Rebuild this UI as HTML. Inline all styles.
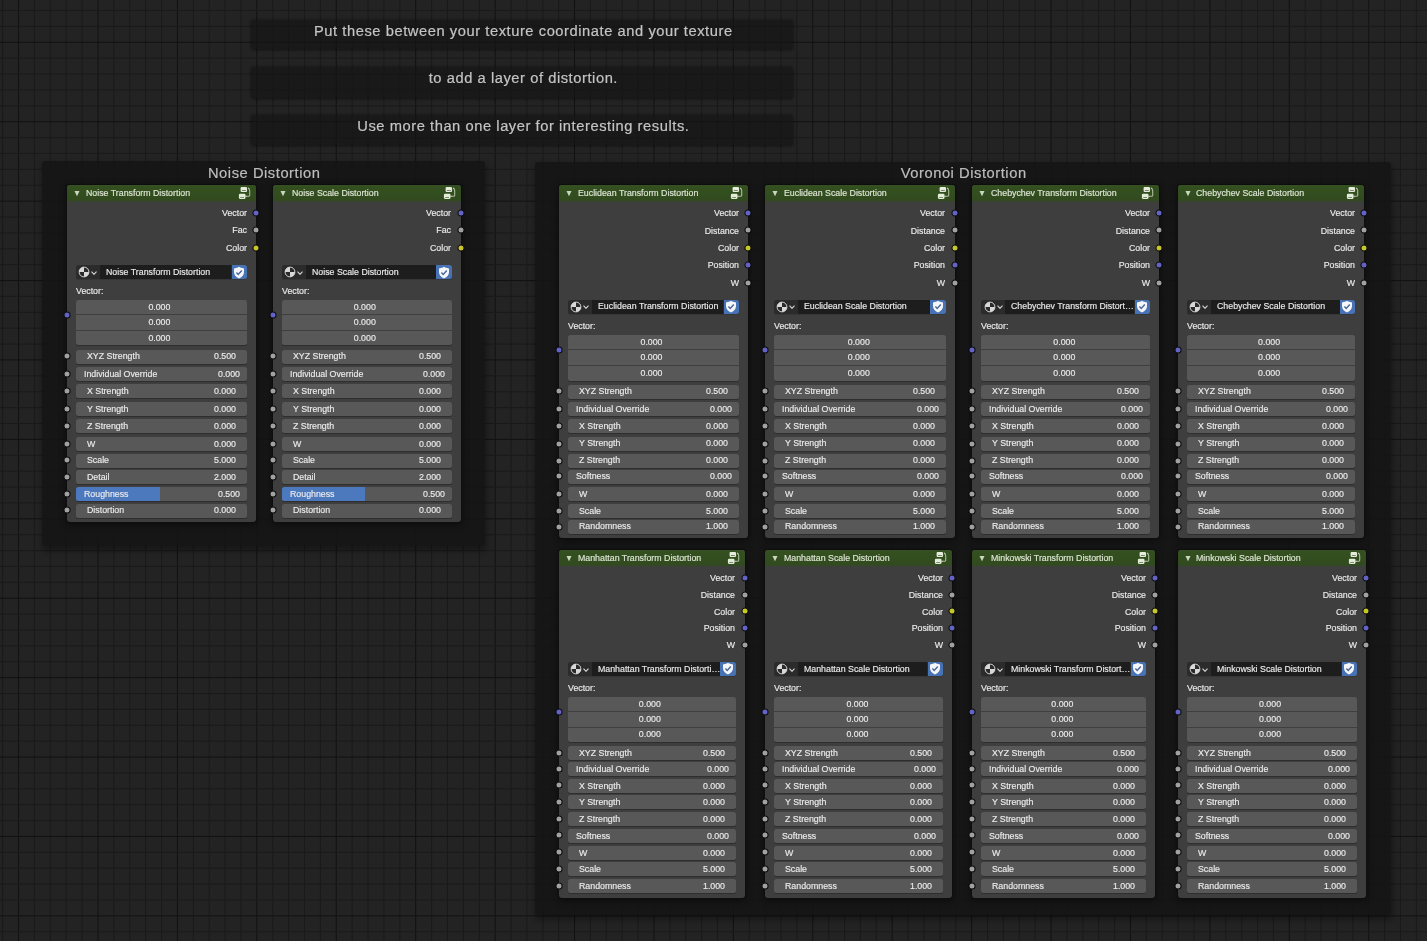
<!DOCTYPE html><html><head><meta charset="utf-8"><style>
*{box-sizing:border-box}
html,body{margin:0;padding:0}
body{width:1427px;height:941px;overflow:hidden;position:relative;background:#232323;font-family:"Liberation Sans", sans-serif;}
.a{position:absolute}
.tf{position:absolute;background:rgba(21,21,21,0.68);border-radius:2px;box-shadow:0 1px 3px rgba(0,0,0,0.35), -1px 0 3px rgba(0,0,0,0.3);color:#bdbdbd;font-size:15.9px;text-align:center;white-space:nowrap}
.fr{position:absolute;background:rgba(20,20,20,0.88);border-radius:3px;box-shadow:1px 4px 6px 1px rgba(0,0,0,0.32)}
.frl{position:absolute;left:0;right:0;color:#bdbdbd;font-size:15.9px;text-align:center;white-space:nowrap}
.nd{position:absolute;background:#3e3e3e;border-radius:3px;box-shadow:0 0 0 1px #0e0e0e, 0 2px 7px 1px rgba(0,0,0,0.42)}
.hd{position:absolute;left:0;top:0;right:0;border-radius:3px 3px 0 0;background:linear-gradient(#37512a 0px,#34501f 1.2px,#314b1f 14.8px,#3e3e3e 100%)}
.ht{position:absolute;will-change:transform;-webkit-text-stroke:0.15px #dfe6d6;color:#dfe6d6;font-size:8.8px;white-space:nowrap;line-height:10px}
.tx{position:absolute;will-change:transform;-webkit-text-stroke:0.15px #ebebeb;color:#ebebeb;font-size:8.8px;white-space:nowrap;line-height:10px}
.so{position:absolute;width:7px;height:7px;border-radius:50%;border:1px solid #0b0b0b}
.fd{position:absolute;background:#585858;border-radius:2.5px;box-shadow:0 1px 0 #2e2e2e}
.db{position:absolute;}
</style></head><body>
<svg class="a" style="left:0;top:0" width="1427" height="941"><rect x="2.20" y="0" width="1" height="941" fill="#1a1a1a"/><rect x="18.08" y="0" width="1" height="941" fill="#121212"/><rect x="33.97" y="0" width="1" height="941" fill="#1a1a1a"/><rect x="49.85" y="0" width="1" height="941" fill="#1a1a1a"/><rect x="65.74" y="0" width="1" height="941" fill="#1a1a1a"/><rect x="81.62" y="0" width="1" height="941" fill="#1a1a1a"/><rect x="97.50" y="0" width="1" height="941" fill="#121212"/><rect x="113.39" y="0" width="1" height="941" fill="#1a1a1a"/><rect x="129.27" y="0" width="1" height="941" fill="#1a1a1a"/><rect x="145.16" y="0" width="1" height="941" fill="#1a1a1a"/><rect x="161.04" y="0" width="1" height="941" fill="#1a1a1a"/><rect x="176.92" y="0" width="1" height="941" fill="#121212"/><rect x="192.81" y="0" width="1" height="941" fill="#1a1a1a"/><rect x="208.69" y="0" width="1" height="941" fill="#1a1a1a"/><rect x="224.58" y="0" width="1" height="941" fill="#1a1a1a"/><rect x="240.46" y="0" width="1" height="941" fill="#1a1a1a"/><rect x="256.34" y="0" width="1" height="941" fill="#121212"/><rect x="272.23" y="0" width="1" height="941" fill="#1a1a1a"/><rect x="288.11" y="0" width="1" height="941" fill="#1a1a1a"/><rect x="304.00" y="0" width="1" height="941" fill="#1a1a1a"/><rect x="319.88" y="0" width="1" height="941" fill="#1a1a1a"/><rect x="335.76" y="0" width="1" height="941" fill="#121212"/><rect x="351.65" y="0" width="1" height="941" fill="#1a1a1a"/><rect x="367.53" y="0" width="1" height="941" fill="#1a1a1a"/><rect x="383.42" y="0" width="1" height="941" fill="#1a1a1a"/><rect x="399.30" y="0" width="1" height="941" fill="#1a1a1a"/><rect x="415.18" y="0" width="1" height="941" fill="#121212"/><rect x="431.07" y="0" width="1" height="941" fill="#1a1a1a"/><rect x="446.95" y="0" width="1" height="941" fill="#1a1a1a"/><rect x="462.84" y="0" width="1" height="941" fill="#1a1a1a"/><rect x="478.72" y="0" width="1" height="941" fill="#1a1a1a"/><rect x="494.60" y="0" width="1" height="941" fill="#121212"/><rect x="510.49" y="0" width="1" height="941" fill="#1a1a1a"/><rect x="526.37" y="0" width="1" height="941" fill="#1a1a1a"/><rect x="542.26" y="0" width="1" height="941" fill="#1a1a1a"/><rect x="558.14" y="0" width="1" height="941" fill="#1a1a1a"/><rect x="574.02" y="0" width="1" height="941" fill="#121212"/><rect x="589.91" y="0" width="1" height="941" fill="#1a1a1a"/><rect x="605.79" y="0" width="1" height="941" fill="#1a1a1a"/><rect x="621.68" y="0" width="1" height="941" fill="#1a1a1a"/><rect x="637.56" y="0" width="1" height="941" fill="#1a1a1a"/><rect x="653.44" y="0" width="1" height="941" fill="#121212"/><rect x="669.33" y="0" width="1" height="941" fill="#1a1a1a"/><rect x="685.21" y="0" width="1" height="941" fill="#1a1a1a"/><rect x="701.10" y="0" width="1" height="941" fill="#1a1a1a"/><rect x="716.98" y="0" width="1" height="941" fill="#1a1a1a"/><rect x="732.86" y="0" width="1" height="941" fill="#121212"/><rect x="748.75" y="0" width="1" height="941" fill="#1a1a1a"/><rect x="764.63" y="0" width="1" height="941" fill="#1a1a1a"/><rect x="780.52" y="0" width="1" height="941" fill="#1a1a1a"/><rect x="796.40" y="0" width="1" height="941" fill="#1a1a1a"/><rect x="812.28" y="0" width="1" height="941" fill="#121212"/><rect x="828.17" y="0" width="1" height="941" fill="#1a1a1a"/><rect x="844.05" y="0" width="1" height="941" fill="#1a1a1a"/><rect x="859.94" y="0" width="1" height="941" fill="#1a1a1a"/><rect x="875.82" y="0" width="1" height="941" fill="#1a1a1a"/><rect x="891.70" y="0" width="1" height="941" fill="#121212"/><rect x="907.59" y="0" width="1" height="941" fill="#1a1a1a"/><rect x="923.47" y="0" width="1" height="941" fill="#1a1a1a"/><rect x="939.36" y="0" width="1" height="941" fill="#1a1a1a"/><rect x="955.24" y="0" width="1" height="941" fill="#1a1a1a"/><rect x="971.12" y="0" width="1" height="941" fill="#121212"/><rect x="987.01" y="0" width="1" height="941" fill="#1a1a1a"/><rect x="1002.89" y="0" width="1" height="941" fill="#1a1a1a"/><rect x="1018.78" y="0" width="1" height="941" fill="#1a1a1a"/><rect x="1034.66" y="0" width="1" height="941" fill="#1a1a1a"/><rect x="1050.54" y="0" width="1" height="941" fill="#121212"/><rect x="1066.43" y="0" width="1" height="941" fill="#1a1a1a"/><rect x="1082.31" y="0" width="1" height="941" fill="#1a1a1a"/><rect x="1098.20" y="0" width="1" height="941" fill="#1a1a1a"/><rect x="1114.08" y="0" width="1" height="941" fill="#1a1a1a"/><rect x="1129.96" y="0" width="1" height="941" fill="#121212"/><rect x="1145.85" y="0" width="1" height="941" fill="#1a1a1a"/><rect x="1161.73" y="0" width="1" height="941" fill="#1a1a1a"/><rect x="1177.62" y="0" width="1" height="941" fill="#1a1a1a"/><rect x="1193.50" y="0" width="1" height="941" fill="#1a1a1a"/><rect x="1209.38" y="0" width="1" height="941" fill="#121212"/><rect x="1225.27" y="0" width="1" height="941" fill="#1a1a1a"/><rect x="1241.15" y="0" width="1" height="941" fill="#1a1a1a"/><rect x="1257.04" y="0" width="1" height="941" fill="#1a1a1a"/><rect x="1272.92" y="0" width="1" height="941" fill="#1a1a1a"/><rect x="1288.80" y="0" width="1" height="941" fill="#121212"/><rect x="1304.69" y="0" width="1" height="941" fill="#1a1a1a"/><rect x="1320.57" y="0" width="1" height="941" fill="#1a1a1a"/><rect x="1336.46" y="0" width="1" height="941" fill="#1a1a1a"/><rect x="1352.34" y="0" width="1" height="941" fill="#1a1a1a"/><rect x="1368.22" y="0" width="1" height="941" fill="#121212"/><rect x="1384.11" y="0" width="1" height="941" fill="#1a1a1a"/><rect x="1399.99" y="0" width="1" height="941" fill="#1a1a1a"/><rect x="1415.88" y="0" width="1" height="941" fill="#1a1a1a"/><rect x="0" y="10.00" width="1427" height="1" fill="#1a1a1a"/><rect x="0" y="25.88" width="1427" height="1" fill="#1a1a1a"/><rect x="0" y="41.77" width="1427" height="1" fill="#121212"/><rect x="0" y="57.65" width="1427" height="1" fill="#1a1a1a"/><rect x="0" y="73.54" width="1427" height="1" fill="#1a1a1a"/><rect x="0" y="89.42" width="1427" height="1" fill="#1a1a1a"/><rect x="0" y="105.30" width="1427" height="1" fill="#1a1a1a"/><rect x="0" y="121.19" width="1427" height="1" fill="#121212"/><rect x="0" y="137.07" width="1427" height="1" fill="#1a1a1a"/><rect x="0" y="152.96" width="1427" height="1" fill="#1a1a1a"/><rect x="0" y="168.84" width="1427" height="1" fill="#1a1a1a"/><rect x="0" y="184.72" width="1427" height="1" fill="#1a1a1a"/><rect x="0" y="200.61" width="1427" height="1" fill="#121212"/><rect x="0" y="216.49" width="1427" height="1" fill="#1a1a1a"/><rect x="0" y="232.38" width="1427" height="1" fill="#1a1a1a"/><rect x="0" y="248.26" width="1427" height="1" fill="#1a1a1a"/><rect x="0" y="264.14" width="1427" height="1" fill="#1a1a1a"/><rect x="0" y="280.03" width="1427" height="1" fill="#121212"/><rect x="0" y="295.91" width="1427" height="1" fill="#1a1a1a"/><rect x="0" y="311.80" width="1427" height="1" fill="#1a1a1a"/><rect x="0" y="327.68" width="1427" height="1" fill="#1a1a1a"/><rect x="0" y="343.56" width="1427" height="1" fill="#1a1a1a"/><rect x="0" y="359.45" width="1427" height="1" fill="#121212"/><rect x="0" y="375.33" width="1427" height="1" fill="#1a1a1a"/><rect x="0" y="391.22" width="1427" height="1" fill="#1a1a1a"/><rect x="0" y="407.10" width="1427" height="1" fill="#1a1a1a"/><rect x="0" y="422.98" width="1427" height="1" fill="#1a1a1a"/><rect x="0" y="438.87" width="1427" height="1" fill="#121212"/><rect x="0" y="454.75" width="1427" height="1" fill="#1a1a1a"/><rect x="0" y="470.64" width="1427" height="1" fill="#1a1a1a"/><rect x="0" y="486.52" width="1427" height="1" fill="#1a1a1a"/><rect x="0" y="502.40" width="1427" height="1" fill="#1a1a1a"/><rect x="0" y="518.29" width="1427" height="1" fill="#121212"/><rect x="0" y="534.17" width="1427" height="1" fill="#1a1a1a"/><rect x="0" y="550.06" width="1427" height="1" fill="#1a1a1a"/><rect x="0" y="565.94" width="1427" height="1" fill="#1a1a1a"/><rect x="0" y="581.82" width="1427" height="1" fill="#1a1a1a"/><rect x="0" y="597.71" width="1427" height="1" fill="#121212"/><rect x="0" y="613.59" width="1427" height="1" fill="#1a1a1a"/><rect x="0" y="629.48" width="1427" height="1" fill="#1a1a1a"/><rect x="0" y="645.36" width="1427" height="1" fill="#1a1a1a"/><rect x="0" y="661.24" width="1427" height="1" fill="#1a1a1a"/><rect x="0" y="677.13" width="1427" height="1" fill="#121212"/><rect x="0" y="693.01" width="1427" height="1" fill="#1a1a1a"/><rect x="0" y="708.90" width="1427" height="1" fill="#1a1a1a"/><rect x="0" y="724.78" width="1427" height="1" fill="#1a1a1a"/><rect x="0" y="740.66" width="1427" height="1" fill="#1a1a1a"/><rect x="0" y="756.55" width="1427" height="1" fill="#121212"/><rect x="0" y="772.43" width="1427" height="1" fill="#1a1a1a"/><rect x="0" y="788.32" width="1427" height="1" fill="#1a1a1a"/><rect x="0" y="804.20" width="1427" height="1" fill="#1a1a1a"/><rect x="0" y="820.08" width="1427" height="1" fill="#1a1a1a"/><rect x="0" y="835.97" width="1427" height="1" fill="#121212"/><rect x="0" y="851.85" width="1427" height="1" fill="#1a1a1a"/><rect x="0" y="867.74" width="1427" height="1" fill="#1a1a1a"/><rect x="0" y="883.62" width="1427" height="1" fill="#1a1a1a"/><rect x="0" y="899.50" width="1427" height="1" fill="#1a1a1a"/><rect x="0" y="915.39" width="1427" height="1" fill="#121212"/><rect x="0" y="931.27" width="1427" height="1" fill="#1a1a1a"/></svg>
<div class="tf" style="left:252.3px;top:19.5px;width:540.7px;height:29.1px"></div>
<div class="a" style="left:252.58px;width:540.7px;top:23.36px;line-height:16.89px;font-size:14.7px;letter-spacing:0.56px;-webkit-text-stroke:0.2px #c4c4c4;color:#c4c4c4;text-align:center;white-space:nowrap;will-change:transform;height:16.89px">Put these between your texture coordinate and your texture</div>
<div class="tf" style="left:252.3px;top:66.9px;width:540.7px;height:30.799999999999997px"></div>
<div class="a" style="left:252.58px;width:540.7px;top:70.46px;line-height:16.89px;font-size:14.7px;letter-spacing:0.56px;-webkit-text-stroke:0.2px #c4c4c4;color:#c4c4c4;text-align:center;white-space:nowrap;will-change:transform;height:16.89px">to add a layer of distortion.</div>
<div class="tf" style="left:252.3px;top:115.3px;width:540.7px;height:29.39999999999999px"></div>
<div class="a" style="left:252.58px;width:540.7px;top:118.06px;line-height:16.89px;font-size:14.7px;letter-spacing:0.56px;-webkit-text-stroke:0.2px #c4c4c4;color:#c4c4c4;text-align:center;white-space:nowrap;will-change:transform;height:16.89px">Use more than one layer for interesting results.</div>
<div class="fr" style="left:42.4px;top:161.2px;width:442.40000000000003px;height:384.8px"></div>
<div class="a" style="left:42.67px;width:442.40000000000003px;top:165.06px;line-height:16.89px;height:16.89px;font-size:14.7px;letter-spacing:0.55px;-webkit-text-stroke:0.2px #bdbdbd;color:#bdbdbd;text-align:center;white-space:nowrap;will-change:transform">Noise Distortion</div>
<div class="fr" style="left:535.4px;top:161.6px;width:855.4px;height:753.6999999999999px"></div>
<div class="a" style="left:535.67px;width:855.4px;top:165.06px;line-height:16.89px;height:16.89px;font-size:14.7px;letter-spacing:0.55px;-webkit-text-stroke:0.2px #bdbdbd;color:#bdbdbd;text-align:center;white-space:nowrap;will-change:transform">Voronoi Distortion</div>
<div class="nd" style="left:67.00px;top:185.00px;width:188.80px;height:336.60px"><div class="hd" style="height:17.60px"></div></div><svg class="a" style="left:74.00px;top:190.60px" width="6" height="6" viewBox="0 0 6 6"><path d="M0.5 0.1 L5.5 0.1 L3 5.2 Z" fill="#cad6bd"/></svg><div class="ht" style="left:85.50px;top:187.84px;line-height:10.11px;">Noise Transform Distortion</div><svg class="a" style="left:235.80px;top:185.00px" width="16" height="16" viewBox="0 0 16 16"><rect x="4.6" y="1.9" width="6.45" height="5.1" rx="1.1" fill="#e6eedb"/><rect x="5.9" y="5.1" width="3.95" height="0.8" fill="#5e6a55"/><rect x="2.9" y="8.85" width="6.6" height="5.1" rx="1.1" fill="#e2ecd6"/><rect x="4.2" y="12.2" width="3.8" height="0.75" fill="#5e6a55"/><path d="M12.3 2.9 Q13.7 3.6 13.7 6 L13.7 10.2 Q13.7 11.3 12.6 11.3 L9.6 11.3" fill="none" stroke="#aebd9e" stroke-width="1.1"/><path d="M12.0 2.6 L13.0 3.2 L12.6 4.6 Z" fill="#d8e4cc"/><path d="M9.4 10.4 L11.2 11.3 L9.4 12.2 Z" fill="#c4d2b6"/></svg><div class="tx" style="left:46.50px;width:200px;text-align:right;top:207.94px;line-height:10.11px;">Vector</div><svg class="a" style="left:250.80px;top:207.70px" width="10" height="10" viewBox="0 0 10 10"><circle cx="5" cy="5" r="3.05" fill="#6363c7" stroke="#0c0c0c" stroke-width="1.1"/></svg><div class="tx" style="left:46.50px;width:200px;text-align:right;top:225.34px;line-height:10.11px;">Fac</div><svg class="a" style="left:250.80px;top:225.10px" width="10" height="10" viewBox="0 0 10 10"><circle cx="5" cy="5" r="3.05" fill="#a1a1a1" stroke="#0c0c0c" stroke-width="1.1"/></svg><div class="tx" style="left:46.50px;width:200px;text-align:right;top:242.94px;line-height:10.11px;">Color</div><svg class="a" style="left:250.80px;top:242.70px" width="10" height="10" viewBox="0 0 10 10"><circle cx="5" cy="5" r="3.05" fill="#c7c729" stroke="#0c0c0c" stroke-width="1.1"/></svg><div class="a" style="left:76.00px;top:265.00px;width:170.80px;height:14.00px;background:#2b2b2b;border-radius:2.5px;box-shadow:0 1px 0 #363636"></div><div class="a" style="left:99.70px;top:265.00px;width:131.60px;height:14.00px;background:#1d1d1d"></div><svg class="a" style="left:78.30px;top:266.00px" width="12" height="12" viewBox="0 0 12 12"><circle cx="6" cy="6" r="5" fill="#d8d8d8"/><path d="M6 1 A5 5 0 0 1 11 6 L6 6 Z" fill="#2a2a2a"/><path d="M6 6 L1 6 A5 5 0 0 0 6 11 Z" fill="#2a2a2a"/><circle cx="6" cy="6" r="4.9" fill="none" stroke="#d8d8d8" stroke-width="0.9"/></svg><svg class="a" style="left:91.30px;top:270.60px" width="6" height="4" viewBox="0 0 6 4"><path d="M0.5 0.7 L3 3.3 L5.5 0.7" fill="none" stroke="#d8d8d8" stroke-width="1.1"/></svg><div class="tx" style="left:105.70px;top:267.14px;line-height:10.11px;">Noise Transform Distortion</div><div class="a" style="left:231.50px;top:265.00px;width:15.30px;height:14.00px;background:#4772b3;border-radius:0 2.5px 2.5px 0"></div><svg class="a" style="left:233.15px;top:265.50px" width="12" height="13" viewBox="0 0 12 13"><path d="M6 0.7 L7.2 1.6 L11 2.4 L11 6 Q11 10.3 6 12.4 Q1 10.3 1 6 L1 2.4 L4.8 1.6 Z" fill="#f4f6fa"/><path d="M3.4 6.6 L5.2 8.4 L8.8 4.6" fill="none" stroke="#4a6796" stroke-width="1.4"/></svg><div class="tx" style="left:76.00px;top:285.94px;line-height:10.11px;">Vector:</div><div class="fd" style="left:76.00px;top:300.10px;width:170.80px;height:45.40px"></div><div class="a" style="left:76.00px;top:313.80px;width:170.80px;height:1px;background:#3f3f3f"></div><div class="a" style="left:76.00px;top:329.80px;width:170.80px;height:1px;background:#3f3f3f"></div><div class="tx" style="left:74.40px;width:170.80px;text-align:center;top:301.84px;line-height:10.11px;">0.000</div><div class="tx" style="left:74.40px;width:170.80px;text-align:center;top:316.94px;line-height:10.11px;">0.000</div><div class="tx" style="left:74.40px;width:170.80px;text-align:center;top:332.54px;line-height:10.11px;">0.000</div><svg class="a" style="left:62.00px;top:310.20px" width="10" height="10" viewBox="0 0 10 10"><circle cx="5" cy="5" r="3.05" fill="#6363c7" stroke="#0c0c0c" stroke-width="1.1"/></svg><div class="fd" style="left:76.00px;top:349.60px;width:170.80px;height:14.00px;overflow:hidden"></div><div class="tx" style="left:87.20px;top:351.24px;line-height:10.11px;">XYZ Strength</div><div class="tx" style="left:35.70px;width:200px;text-align:right;top:351.24px;line-height:10.11px;">0.500</div><svg class="a" style="left:62.00px;top:351.20px" width="10" height="10" viewBox="0 0 10 10"><circle cx="5" cy="5" r="3.05" fill="#a1a1a1" stroke="#0c0c0c" stroke-width="1.1"/></svg><div class="fd" style="left:76.00px;top:367.20px;width:170.80px;height:14.00px;overflow:hidden"></div><div class="tx" style="left:83.70px;top:368.84px;line-height:10.11px;">Individual Override</div><div class="tx" style="left:39.70px;width:200px;text-align:right;top:368.84px;line-height:10.11px;">0.000</div><svg class="a" style="left:62.00px;top:368.80px" width="10" height="10" viewBox="0 0 10 10"><circle cx="5" cy="5" r="3.05" fill="#a1a1a1" stroke="#0c0c0c" stroke-width="1.1"/></svg><div class="fd" style="left:76.00px;top:384.40px;width:170.80px;height:14.00px;overflow:hidden"></div><div class="tx" style="left:87.20px;top:386.04px;line-height:10.11px;">X Strength</div><div class="tx" style="left:35.70px;width:200px;text-align:right;top:386.04px;line-height:10.11px;">0.000</div><svg class="a" style="left:62.00px;top:386.00px" width="10" height="10" viewBox="0 0 10 10"><circle cx="5" cy="5" r="3.05" fill="#a1a1a1" stroke="#0c0c0c" stroke-width="1.1"/></svg><div class="fd" style="left:76.00px;top:402.10px;width:170.80px;height:14.00px;overflow:hidden"></div><div class="tx" style="left:87.20px;top:403.74px;line-height:10.11px;">Y Strength</div><div class="tx" style="left:35.70px;width:200px;text-align:right;top:403.74px;line-height:10.11px;">0.000</div><svg class="a" style="left:62.00px;top:403.70px" width="10" height="10" viewBox="0 0 10 10"><circle cx="5" cy="5" r="3.05" fill="#a1a1a1" stroke="#0c0c0c" stroke-width="1.1"/></svg><div class="fd" style="left:76.00px;top:419.30px;width:170.80px;height:14.00px;overflow:hidden"></div><div class="tx" style="left:87.20px;top:420.94px;line-height:10.11px;">Z Strength</div><div class="tx" style="left:35.70px;width:200px;text-align:right;top:420.94px;line-height:10.11px;">0.000</div><svg class="a" style="left:62.00px;top:420.90px" width="10" height="10" viewBox="0 0 10 10"><circle cx="5" cy="5" r="3.05" fill="#a1a1a1" stroke="#0c0c0c" stroke-width="1.1"/></svg><div class="fd" style="left:76.00px;top:437.10px;width:170.80px;height:14.00px;overflow:hidden"></div><div class="tx" style="left:87.20px;top:438.74px;line-height:10.11px;">W</div><div class="tx" style="left:35.70px;width:200px;text-align:right;top:438.74px;line-height:10.11px;">0.000</div><svg class="a" style="left:62.00px;top:438.70px" width="10" height="10" viewBox="0 0 10 10"><circle cx="5" cy="5" r="3.05" fill="#a1a1a1" stroke="#0c0c0c" stroke-width="1.1"/></svg><div class="fd" style="left:76.00px;top:453.70px;width:170.80px;height:14.00px;overflow:hidden"></div><div class="tx" style="left:87.20px;top:455.34px;line-height:10.11px;">Scale</div><div class="tx" style="left:35.70px;width:200px;text-align:right;top:455.34px;line-height:10.11px;">5.000</div><svg class="a" style="left:62.00px;top:455.30px" width="10" height="10" viewBox="0 0 10 10"><circle cx="5" cy="5" r="3.05" fill="#a1a1a1" stroke="#0c0c0c" stroke-width="1.1"/></svg><div class="fd" style="left:76.00px;top:469.90px;width:170.80px;height:14.00px;overflow:hidden"></div><div class="tx" style="left:87.20px;top:471.54px;line-height:10.11px;">Detail</div><div class="tx" style="left:35.70px;width:200px;text-align:right;top:471.54px;line-height:10.11px;">2.000</div><svg class="a" style="left:62.00px;top:471.50px" width="10" height="10" viewBox="0 0 10 10"><circle cx="5" cy="5" r="3.05" fill="#a1a1a1" stroke="#0c0c0c" stroke-width="1.1"/></svg><div class="fd" style="left:76.00px;top:487.10px;width:170.80px;height:14.00px;overflow:hidden"><div style="position:absolute;left:0;top:0;bottom:0;width:83.69px;background:#4c78bd"></div></div><div class="tx" style="left:83.70px;top:488.74px;line-height:10.11px;">Roughness</div><div class="tx" style="left:39.70px;width:200px;text-align:right;top:488.74px;line-height:10.11px;">0.500</div><svg class="a" style="left:62.00px;top:488.70px" width="10" height="10" viewBox="0 0 10 10"><circle cx="5" cy="5" r="3.05" fill="#a1a1a1" stroke="#0c0c0c" stroke-width="1.1"/></svg><div class="fd" style="left:76.00px;top:503.70px;width:170.80px;height:14.00px;overflow:hidden"></div><div class="tx" style="left:87.20px;top:505.34px;line-height:10.11px;">Distortion</div><div class="tx" style="left:35.70px;width:200px;text-align:right;top:505.34px;line-height:10.11px;">0.000</div><svg class="a" style="left:62.00px;top:505.30px" width="10" height="10" viewBox="0 0 10 10"><circle cx="5" cy="5" r="3.05" fill="#a1a1a1" stroke="#0c0c0c" stroke-width="1.1"/></svg>
<div class="nd" style="left:273.00px;top:185.00px;width:187.60px;height:336.60px"><div class="hd" style="height:17.60px"></div></div><svg class="a" style="left:280.00px;top:190.60px" width="6" height="6" viewBox="0 0 6 6"><path d="M0.5 0.1 L5.5 0.1 L3 5.2 Z" fill="#cad6bd"/></svg><div class="ht" style="left:291.50px;top:187.84px;line-height:10.11px;">Noise Scale Distortion</div><svg class="a" style="left:440.60px;top:185.00px" width="16" height="16" viewBox="0 0 16 16"><rect x="4.6" y="1.9" width="6.45" height="5.1" rx="1.1" fill="#e6eedb"/><rect x="5.9" y="5.1" width="3.95" height="0.8" fill="#5e6a55"/><rect x="2.9" y="8.85" width="6.6" height="5.1" rx="1.1" fill="#e2ecd6"/><rect x="4.2" y="12.2" width="3.8" height="0.75" fill="#5e6a55"/><path d="M12.3 2.9 Q13.7 3.6 13.7 6 L13.7 10.2 Q13.7 11.3 12.6 11.3 L9.6 11.3" fill="none" stroke="#aebd9e" stroke-width="1.1"/><path d="M12.0 2.6 L13.0 3.2 L12.6 4.6 Z" fill="#d8e4cc"/><path d="M9.4 10.4 L11.2 11.3 L9.4 12.2 Z" fill="#c4d2b6"/></svg><div class="tx" style="left:251.30px;width:200px;text-align:right;top:207.94px;line-height:10.11px;">Vector</div><svg class="a" style="left:455.60px;top:207.70px" width="10" height="10" viewBox="0 0 10 10"><circle cx="5" cy="5" r="3.05" fill="#6363c7" stroke="#0c0c0c" stroke-width="1.1"/></svg><div class="tx" style="left:251.30px;width:200px;text-align:right;top:225.34px;line-height:10.11px;">Fac</div><svg class="a" style="left:455.60px;top:225.10px" width="10" height="10" viewBox="0 0 10 10"><circle cx="5" cy="5" r="3.05" fill="#a1a1a1" stroke="#0c0c0c" stroke-width="1.1"/></svg><div class="tx" style="left:251.30px;width:200px;text-align:right;top:242.94px;line-height:10.11px;">Color</div><svg class="a" style="left:455.60px;top:242.70px" width="10" height="10" viewBox="0 0 10 10"><circle cx="5" cy="5" r="3.05" fill="#c7c729" stroke="#0c0c0c" stroke-width="1.1"/></svg><div class="a" style="left:282.00px;top:265.00px;width:169.60px;height:14.00px;background:#2b2b2b;border-radius:2.5px;box-shadow:0 1px 0 #363636"></div><div class="a" style="left:305.70px;top:265.00px;width:130.40px;height:14.00px;background:#1d1d1d"></div><svg class="a" style="left:284.30px;top:266.00px" width="12" height="12" viewBox="0 0 12 12"><circle cx="6" cy="6" r="5" fill="#d8d8d8"/><path d="M6 1 A5 5 0 0 1 11 6 L6 6 Z" fill="#2a2a2a"/><path d="M6 6 L1 6 A5 5 0 0 0 6 11 Z" fill="#2a2a2a"/><circle cx="6" cy="6" r="4.9" fill="none" stroke="#d8d8d8" stroke-width="0.9"/></svg><svg class="a" style="left:297.30px;top:270.60px" width="6" height="4" viewBox="0 0 6 4"><path d="M0.5 0.7 L3 3.3 L5.5 0.7" fill="none" stroke="#d8d8d8" stroke-width="1.1"/></svg><div class="tx" style="left:311.70px;top:267.14px;line-height:10.11px;">Noise Scale Distortion</div><div class="a" style="left:436.30px;top:265.00px;width:15.30px;height:14.00px;background:#4772b3;border-radius:0 2.5px 2.5px 0"></div><svg class="a" style="left:437.95px;top:265.50px" width="12" height="13" viewBox="0 0 12 13"><path d="M6 0.7 L7.2 1.6 L11 2.4 L11 6 Q11 10.3 6 12.4 Q1 10.3 1 6 L1 2.4 L4.8 1.6 Z" fill="#f4f6fa"/><path d="M3.4 6.6 L5.2 8.4 L8.8 4.6" fill="none" stroke="#4a6796" stroke-width="1.4"/></svg><div class="tx" style="left:282.00px;top:285.94px;line-height:10.11px;">Vector:</div><div class="fd" style="left:282.00px;top:300.10px;width:169.60px;height:45.40px"></div><div class="a" style="left:282.00px;top:313.80px;width:169.60px;height:1px;background:#3f3f3f"></div><div class="a" style="left:282.00px;top:329.80px;width:169.60px;height:1px;background:#3f3f3f"></div><div class="tx" style="left:280.40px;width:169.60px;text-align:center;top:301.84px;line-height:10.11px;">0.000</div><div class="tx" style="left:280.40px;width:169.60px;text-align:center;top:316.94px;line-height:10.11px;">0.000</div><div class="tx" style="left:280.40px;width:169.60px;text-align:center;top:332.54px;line-height:10.11px;">0.000</div><svg class="a" style="left:268.00px;top:310.20px" width="10" height="10" viewBox="0 0 10 10"><circle cx="5" cy="5" r="3.05" fill="#6363c7" stroke="#0c0c0c" stroke-width="1.1"/></svg><div class="fd" style="left:282.00px;top:349.60px;width:169.60px;height:14.00px;overflow:hidden"></div><div class="tx" style="left:293.20px;top:351.24px;line-height:10.11px;">XYZ Strength</div><div class="tx" style="left:240.50px;width:200px;text-align:right;top:351.24px;line-height:10.11px;">0.500</div><svg class="a" style="left:268.00px;top:351.20px" width="10" height="10" viewBox="0 0 10 10"><circle cx="5" cy="5" r="3.05" fill="#a1a1a1" stroke="#0c0c0c" stroke-width="1.1"/></svg><div class="fd" style="left:282.00px;top:367.20px;width:169.60px;height:14.00px;overflow:hidden"></div><div class="tx" style="left:289.70px;top:368.84px;line-height:10.11px;">Individual Override</div><div class="tx" style="left:244.50px;width:200px;text-align:right;top:368.84px;line-height:10.11px;">0.000</div><svg class="a" style="left:268.00px;top:368.80px" width="10" height="10" viewBox="0 0 10 10"><circle cx="5" cy="5" r="3.05" fill="#a1a1a1" stroke="#0c0c0c" stroke-width="1.1"/></svg><div class="fd" style="left:282.00px;top:384.40px;width:169.60px;height:14.00px;overflow:hidden"></div><div class="tx" style="left:293.20px;top:386.04px;line-height:10.11px;">X Strength</div><div class="tx" style="left:240.50px;width:200px;text-align:right;top:386.04px;line-height:10.11px;">0.000</div><svg class="a" style="left:268.00px;top:386.00px" width="10" height="10" viewBox="0 0 10 10"><circle cx="5" cy="5" r="3.05" fill="#a1a1a1" stroke="#0c0c0c" stroke-width="1.1"/></svg><div class="fd" style="left:282.00px;top:402.10px;width:169.60px;height:14.00px;overflow:hidden"></div><div class="tx" style="left:293.20px;top:403.74px;line-height:10.11px;">Y Strength</div><div class="tx" style="left:240.50px;width:200px;text-align:right;top:403.74px;line-height:10.11px;">0.000</div><svg class="a" style="left:268.00px;top:403.70px" width="10" height="10" viewBox="0 0 10 10"><circle cx="5" cy="5" r="3.05" fill="#a1a1a1" stroke="#0c0c0c" stroke-width="1.1"/></svg><div class="fd" style="left:282.00px;top:419.30px;width:169.60px;height:14.00px;overflow:hidden"></div><div class="tx" style="left:293.20px;top:420.94px;line-height:10.11px;">Z Strength</div><div class="tx" style="left:240.50px;width:200px;text-align:right;top:420.94px;line-height:10.11px;">0.000</div><svg class="a" style="left:268.00px;top:420.90px" width="10" height="10" viewBox="0 0 10 10"><circle cx="5" cy="5" r="3.05" fill="#a1a1a1" stroke="#0c0c0c" stroke-width="1.1"/></svg><div class="fd" style="left:282.00px;top:437.10px;width:169.60px;height:14.00px;overflow:hidden"></div><div class="tx" style="left:293.20px;top:438.74px;line-height:10.11px;">W</div><div class="tx" style="left:240.50px;width:200px;text-align:right;top:438.74px;line-height:10.11px;">0.000</div><svg class="a" style="left:268.00px;top:438.70px" width="10" height="10" viewBox="0 0 10 10"><circle cx="5" cy="5" r="3.05" fill="#a1a1a1" stroke="#0c0c0c" stroke-width="1.1"/></svg><div class="fd" style="left:282.00px;top:453.70px;width:169.60px;height:14.00px;overflow:hidden"></div><div class="tx" style="left:293.20px;top:455.34px;line-height:10.11px;">Scale</div><div class="tx" style="left:240.50px;width:200px;text-align:right;top:455.34px;line-height:10.11px;">5.000</div><svg class="a" style="left:268.00px;top:455.30px" width="10" height="10" viewBox="0 0 10 10"><circle cx="5" cy="5" r="3.05" fill="#a1a1a1" stroke="#0c0c0c" stroke-width="1.1"/></svg><div class="fd" style="left:282.00px;top:469.90px;width:169.60px;height:14.00px;overflow:hidden"></div><div class="tx" style="left:293.20px;top:471.54px;line-height:10.11px;">Detail</div><div class="tx" style="left:240.50px;width:200px;text-align:right;top:471.54px;line-height:10.11px;">2.000</div><svg class="a" style="left:268.00px;top:471.50px" width="10" height="10" viewBox="0 0 10 10"><circle cx="5" cy="5" r="3.05" fill="#a1a1a1" stroke="#0c0c0c" stroke-width="1.1"/></svg><div class="fd" style="left:282.00px;top:487.10px;width:169.60px;height:14.00px;overflow:hidden"><div style="position:absolute;left:0;top:0;bottom:0;width:83.10px;background:#4c78bd"></div></div><div class="tx" style="left:289.70px;top:488.74px;line-height:10.11px;">Roughness</div><div class="tx" style="left:244.50px;width:200px;text-align:right;top:488.74px;line-height:10.11px;">0.500</div><svg class="a" style="left:268.00px;top:488.70px" width="10" height="10" viewBox="0 0 10 10"><circle cx="5" cy="5" r="3.05" fill="#a1a1a1" stroke="#0c0c0c" stroke-width="1.1"/></svg><div class="fd" style="left:282.00px;top:503.70px;width:169.60px;height:14.00px;overflow:hidden"></div><div class="tx" style="left:293.20px;top:505.34px;line-height:10.11px;">Distortion</div><div class="tx" style="left:240.50px;width:200px;text-align:right;top:505.34px;line-height:10.11px;">0.000</div><svg class="a" style="left:268.00px;top:505.30px" width="10" height="10" viewBox="0 0 10 10"><circle cx="5" cy="5" r="3.05" fill="#a1a1a1" stroke="#0c0c0c" stroke-width="1.1"/></svg>
<div class="nd" style="left:559.00px;top:185.00px;width:189.00px;height:353.40px"><div class="hd" style="height:17.60px"></div></div><svg class="a" style="left:566.00px;top:190.60px" width="6" height="6" viewBox="0 0 6 6"><path d="M0.5 0.1 L5.5 0.1 L3 5.2 Z" fill="#cad6bd"/></svg><div class="ht" style="left:577.50px;top:187.84px;line-height:10.11px;">Euclidean Transform Distortion</div><svg class="a" style="left:728.00px;top:185.00px" width="16" height="16" viewBox="0 0 16 16"><rect x="4.6" y="1.9" width="6.45" height="5.1" rx="1.1" fill="#e6eedb"/><rect x="5.9" y="5.1" width="3.95" height="0.8" fill="#5e6a55"/><rect x="2.9" y="8.85" width="6.6" height="5.1" rx="1.1" fill="#e2ecd6"/><rect x="4.2" y="12.2" width="3.8" height="0.75" fill="#5e6a55"/><path d="M12.3 2.9 Q13.7 3.6 13.7 6 L13.7 10.2 Q13.7 11.3 12.6 11.3 L9.6 11.3" fill="none" stroke="#aebd9e" stroke-width="1.1"/><path d="M12.0 2.6 L13.0 3.2 L12.6 4.6 Z" fill="#d8e4cc"/><path d="M9.4 10.4 L11.2 11.3 L9.4 12.2 Z" fill="#c4d2b6"/></svg><div class="tx" style="left:538.70px;width:200px;text-align:right;top:208.14px;line-height:10.11px;">Vector</div><svg class="a" style="left:743.00px;top:207.90px" width="10" height="10" viewBox="0 0 10 10"><circle cx="5" cy="5" r="3.05" fill="#6363c7" stroke="#0c0c0c" stroke-width="1.1"/></svg><div class="tx" style="left:538.70px;width:200px;text-align:right;top:225.54px;line-height:10.11px;">Distance</div><svg class="a" style="left:743.00px;top:225.30px" width="10" height="10" viewBox="0 0 10 10"><circle cx="5" cy="5" r="3.05" fill="#a1a1a1" stroke="#0c0c0c" stroke-width="1.1"/></svg><div class="tx" style="left:538.70px;width:200px;text-align:right;top:242.84px;line-height:10.11px;">Color</div><svg class="a" style="left:743.00px;top:242.60px" width="10" height="10" viewBox="0 0 10 10"><circle cx="5" cy="5" r="3.05" fill="#c7c729" stroke="#0c0c0c" stroke-width="1.1"/></svg><div class="tx" style="left:538.70px;width:200px;text-align:right;top:260.44px;line-height:10.11px;">Position</div><svg class="a" style="left:743.00px;top:260.20px" width="10" height="10" viewBox="0 0 10 10"><circle cx="5" cy="5" r="3.05" fill="#6363c7" stroke="#0c0c0c" stroke-width="1.1"/></svg><div class="tx" style="left:538.70px;width:200px;text-align:right;top:278.04px;line-height:10.11px;">W</div><svg class="a" style="left:743.00px;top:277.80px" width="10" height="10" viewBox="0 0 10 10"><circle cx="5" cy="5" r="3.05" fill="#a1a1a1" stroke="#0c0c0c" stroke-width="1.1"/></svg><div class="a" style="left:568.00px;top:300.00px;width:171.00px;height:13.60px;background:#2b2b2b;border-radius:2.5px;box-shadow:0 1px 0 #363636"></div><div class="a" style="left:591.70px;top:300.00px;width:131.80px;height:13.60px;background:#1d1d1d"></div><svg class="a" style="left:570.30px;top:300.80px" width="12" height="12" viewBox="0 0 12 12"><circle cx="6" cy="6" r="5" fill="#d8d8d8"/><path d="M6 1 A5 5 0 0 1 11 6 L6 6 Z" fill="#2a2a2a"/><path d="M6 6 L1 6 A5 5 0 0 0 6 11 Z" fill="#2a2a2a"/><circle cx="6" cy="6" r="4.9" fill="none" stroke="#d8d8d8" stroke-width="0.9"/></svg><svg class="a" style="left:583.30px;top:305.40px" width="6" height="4" viewBox="0 0 6 4"><path d="M0.5 0.7 L3 3.3 L5.5 0.7" fill="none" stroke="#d8d8d8" stroke-width="1.1"/></svg><div class="tx" style="left:597.70px;top:301.14px;line-height:10.11px;">Euclidean Transform Distortion</div><div class="a" style="left:723.70px;top:300.00px;width:15.30px;height:13.60px;background:#4772b3;border-radius:0 2.5px 2.5px 0"></div><svg class="a" style="left:725.35px;top:300.30px" width="12" height="13" viewBox="0 0 12 13"><path d="M6 0.7 L7.2 1.6 L11 2.4 L11 6 Q11 10.3 6 12.4 Q1 10.3 1 6 L1 2.4 L4.8 1.6 Z" fill="#f4f6fa"/><path d="M3.4 6.6 L5.2 8.4 L8.8 4.6" fill="none" stroke="#4a6796" stroke-width="1.4"/></svg><div class="tx" style="left:568.00px;top:320.54px;line-height:10.11px;">Vector:</div><div class="fd" style="left:568.00px;top:335.00px;width:171.00px;height:45.60px"></div><div class="a" style="left:568.00px;top:349.10px;width:171.00px;height:1px;background:#3f3f3f"></div><div class="a" style="left:568.00px;top:364.90px;width:171.00px;height:1px;background:#3f3f3f"></div><div class="tx" style="left:566.40px;width:171.00px;text-align:center;top:336.94px;line-height:10.11px;">0.000</div><div class="tx" style="left:566.40px;width:171.00px;text-align:center;top:352.14px;line-height:10.11px;">0.000</div><div class="tx" style="left:566.40px;width:171.00px;text-align:center;top:367.64px;line-height:10.11px;">0.000</div><svg class="a" style="left:554.00px;top:345.20px" width="10" height="10" viewBox="0 0 10 10"><circle cx="5" cy="5" r="3.05" fill="#6363c7" stroke="#0c0c0c" stroke-width="1.1"/></svg><div class="fd" style="left:568.00px;top:384.70px;width:171.00px;height:14.00px;overflow:hidden"></div><div class="tx" style="left:579.20px;top:386.14px;line-height:10.11px;">XYZ Strength</div><div class="tx" style="left:527.90px;width:200px;text-align:right;top:386.14px;line-height:10.11px;">0.500</div><svg class="a" style="left:554.00px;top:386.30px" width="10" height="10" viewBox="0 0 10 10"><circle cx="5" cy="5" r="3.05" fill="#a1a1a1" stroke="#0c0c0c" stroke-width="1.1"/></svg><div class="fd" style="left:568.00px;top:402.10px;width:171.00px;height:14.00px;overflow:hidden"></div><div class="tx" style="left:575.70px;top:403.54px;line-height:10.11px;">Individual Override</div><div class="tx" style="left:531.90px;width:200px;text-align:right;top:403.54px;line-height:10.11px;">0.000</div><svg class="a" style="left:554.00px;top:403.70px" width="10" height="10" viewBox="0 0 10 10"><circle cx="5" cy="5" r="3.05" fill="#a1a1a1" stroke="#0c0c0c" stroke-width="1.1"/></svg><div class="fd" style="left:568.00px;top:419.10px;width:171.00px;height:14.00px;overflow:hidden"></div><div class="tx" style="left:579.20px;top:420.54px;line-height:10.11px;">X Strength</div><div class="tx" style="left:527.90px;width:200px;text-align:right;top:420.54px;line-height:10.11px;">0.000</div><svg class="a" style="left:554.00px;top:420.70px" width="10" height="10" viewBox="0 0 10 10"><circle cx="5" cy="5" r="3.05" fill="#a1a1a1" stroke="#0c0c0c" stroke-width="1.1"/></svg><div class="fd" style="left:568.00px;top:437.00px;width:171.00px;height:14.00px;overflow:hidden"></div><div class="tx" style="left:579.20px;top:438.44px;line-height:10.11px;">Y Strength</div><div class="tx" style="left:527.90px;width:200px;text-align:right;top:438.44px;line-height:10.11px;">0.000</div><svg class="a" style="left:554.00px;top:438.60px" width="10" height="10" viewBox="0 0 10 10"><circle cx="5" cy="5" r="3.05" fill="#a1a1a1" stroke="#0c0c0c" stroke-width="1.1"/></svg><div class="fd" style="left:568.00px;top:454.00px;width:171.00px;height:14.00px;overflow:hidden"></div><div class="tx" style="left:579.20px;top:455.44px;line-height:10.11px;">Z Strength</div><div class="tx" style="left:527.90px;width:200px;text-align:right;top:455.44px;line-height:10.11px;">0.000</div><svg class="a" style="left:554.00px;top:455.60px" width="10" height="10" viewBox="0 0 10 10"><circle cx="5" cy="5" r="3.05" fill="#a1a1a1" stroke="#0c0c0c" stroke-width="1.1"/></svg><div class="fd" style="left:568.00px;top:469.80px;width:171.00px;height:14.00px;overflow:hidden"></div><div class="tx" style="left:575.70px;top:471.24px;line-height:10.11px;">Softness</div><div class="tx" style="left:531.90px;width:200px;text-align:right;top:471.24px;line-height:10.11px;">0.000</div><svg class="a" style="left:554.00px;top:471.40px" width="10" height="10" viewBox="0 0 10 10"><circle cx="5" cy="5" r="3.05" fill="#a1a1a1" stroke="#0c0c0c" stroke-width="1.1"/></svg><div class="fd" style="left:568.00px;top:487.20px;width:171.00px;height:14.00px;overflow:hidden"></div><div class="tx" style="left:579.20px;top:488.64px;line-height:10.11px;">W</div><div class="tx" style="left:527.90px;width:200px;text-align:right;top:488.64px;line-height:10.11px;">0.000</div><svg class="a" style="left:554.00px;top:488.80px" width="10" height="10" viewBox="0 0 10 10"><circle cx="5" cy="5" r="3.05" fill="#a1a1a1" stroke="#0c0c0c" stroke-width="1.1"/></svg><div class="fd" style="left:568.00px;top:504.20px;width:171.00px;height:14.00px;overflow:hidden"></div><div class="tx" style="left:579.20px;top:505.64px;line-height:10.11px;">Scale</div><div class="tx" style="left:527.90px;width:200px;text-align:right;top:505.64px;line-height:10.11px;">5.000</div><svg class="a" style="left:554.00px;top:505.80px" width="10" height="10" viewBox="0 0 10 10"><circle cx="5" cy="5" r="3.05" fill="#a1a1a1" stroke="#0c0c0c" stroke-width="1.1"/></svg><div class="fd" style="left:568.00px;top:520.00px;width:171.00px;height:14.00px;overflow:hidden"></div><div class="tx" style="left:579.20px;top:521.44px;line-height:10.11px;">Randomness</div><div class="tx" style="left:527.90px;width:200px;text-align:right;top:521.44px;line-height:10.11px;">1.000</div><svg class="a" style="left:554.00px;top:521.60px" width="10" height="10" viewBox="0 0 10 10"><circle cx="5" cy="5" r="3.05" fill="#a1a1a1" stroke="#0c0c0c" stroke-width="1.1"/></svg>
<div class="nd" style="left:765.10px;top:185.00px;width:189.60px;height:353.40px"><div class="hd" style="height:17.60px"></div></div><svg class="a" style="left:772.10px;top:190.60px" width="6" height="6" viewBox="0 0 6 6"><path d="M0.5 0.1 L5.5 0.1 L3 5.2 Z" fill="#cad6bd"/></svg><div class="ht" style="left:783.60px;top:187.84px;line-height:10.11px;">Euclidean Scale Distortion</div><svg class="a" style="left:934.70px;top:185.00px" width="16" height="16" viewBox="0 0 16 16"><rect x="4.6" y="1.9" width="6.45" height="5.1" rx="1.1" fill="#e6eedb"/><rect x="5.9" y="5.1" width="3.95" height="0.8" fill="#5e6a55"/><rect x="2.9" y="8.85" width="6.6" height="5.1" rx="1.1" fill="#e2ecd6"/><rect x="4.2" y="12.2" width="3.8" height="0.75" fill="#5e6a55"/><path d="M12.3 2.9 Q13.7 3.6 13.7 6 L13.7 10.2 Q13.7 11.3 12.6 11.3 L9.6 11.3" fill="none" stroke="#aebd9e" stroke-width="1.1"/><path d="M12.0 2.6 L13.0 3.2 L12.6 4.6 Z" fill="#d8e4cc"/><path d="M9.4 10.4 L11.2 11.3 L9.4 12.2 Z" fill="#c4d2b6"/></svg><div class="tx" style="left:745.40px;width:200px;text-align:right;top:208.14px;line-height:10.11px;">Vector</div><svg class="a" style="left:949.70px;top:207.90px" width="10" height="10" viewBox="0 0 10 10"><circle cx="5" cy="5" r="3.05" fill="#6363c7" stroke="#0c0c0c" stroke-width="1.1"/></svg><div class="tx" style="left:745.40px;width:200px;text-align:right;top:225.54px;line-height:10.11px;">Distance</div><svg class="a" style="left:949.70px;top:225.30px" width="10" height="10" viewBox="0 0 10 10"><circle cx="5" cy="5" r="3.05" fill="#a1a1a1" stroke="#0c0c0c" stroke-width="1.1"/></svg><div class="tx" style="left:745.40px;width:200px;text-align:right;top:242.84px;line-height:10.11px;">Color</div><svg class="a" style="left:949.70px;top:242.60px" width="10" height="10" viewBox="0 0 10 10"><circle cx="5" cy="5" r="3.05" fill="#c7c729" stroke="#0c0c0c" stroke-width="1.1"/></svg><div class="tx" style="left:745.40px;width:200px;text-align:right;top:260.44px;line-height:10.11px;">Position</div><svg class="a" style="left:949.70px;top:260.20px" width="10" height="10" viewBox="0 0 10 10"><circle cx="5" cy="5" r="3.05" fill="#6363c7" stroke="#0c0c0c" stroke-width="1.1"/></svg><div class="tx" style="left:745.40px;width:200px;text-align:right;top:278.04px;line-height:10.11px;">W</div><svg class="a" style="left:949.70px;top:277.80px" width="10" height="10" viewBox="0 0 10 10"><circle cx="5" cy="5" r="3.05" fill="#a1a1a1" stroke="#0c0c0c" stroke-width="1.1"/></svg><div class="a" style="left:774.10px;top:300.00px;width:171.60px;height:13.60px;background:#2b2b2b;border-radius:2.5px;box-shadow:0 1px 0 #363636"></div><div class="a" style="left:797.80px;top:300.00px;width:132.40px;height:13.60px;background:#1d1d1d"></div><svg class="a" style="left:776.40px;top:300.80px" width="12" height="12" viewBox="0 0 12 12"><circle cx="6" cy="6" r="5" fill="#d8d8d8"/><path d="M6 1 A5 5 0 0 1 11 6 L6 6 Z" fill="#2a2a2a"/><path d="M6 6 L1 6 A5 5 0 0 0 6 11 Z" fill="#2a2a2a"/><circle cx="6" cy="6" r="4.9" fill="none" stroke="#d8d8d8" stroke-width="0.9"/></svg><svg class="a" style="left:789.40px;top:305.40px" width="6" height="4" viewBox="0 0 6 4"><path d="M0.5 0.7 L3 3.3 L5.5 0.7" fill="none" stroke="#d8d8d8" stroke-width="1.1"/></svg><div class="tx" style="left:803.80px;top:301.14px;line-height:10.11px;">Euclidean Scale Distortion</div><div class="a" style="left:930.40px;top:300.00px;width:15.30px;height:13.60px;background:#4772b3;border-radius:0 2.5px 2.5px 0"></div><svg class="a" style="left:932.05px;top:300.30px" width="12" height="13" viewBox="0 0 12 13"><path d="M6 0.7 L7.2 1.6 L11 2.4 L11 6 Q11 10.3 6 12.4 Q1 10.3 1 6 L1 2.4 L4.8 1.6 Z" fill="#f4f6fa"/><path d="M3.4 6.6 L5.2 8.4 L8.8 4.6" fill="none" stroke="#4a6796" stroke-width="1.4"/></svg><div class="tx" style="left:774.10px;top:320.54px;line-height:10.11px;">Vector:</div><div class="fd" style="left:774.10px;top:335.00px;width:171.60px;height:45.60px"></div><div class="a" style="left:774.10px;top:349.10px;width:171.60px;height:1px;background:#3f3f3f"></div><div class="a" style="left:774.10px;top:364.90px;width:171.60px;height:1px;background:#3f3f3f"></div><div class="tx" style="left:772.50px;width:171.60px;text-align:center;top:336.94px;line-height:10.11px;">0.000</div><div class="tx" style="left:772.50px;width:171.60px;text-align:center;top:352.14px;line-height:10.11px;">0.000</div><div class="tx" style="left:772.50px;width:171.60px;text-align:center;top:367.64px;line-height:10.11px;">0.000</div><svg class="a" style="left:760.10px;top:345.20px" width="10" height="10" viewBox="0 0 10 10"><circle cx="5" cy="5" r="3.05" fill="#6363c7" stroke="#0c0c0c" stroke-width="1.1"/></svg><div class="fd" style="left:774.10px;top:384.70px;width:171.60px;height:14.00px;overflow:hidden"></div><div class="tx" style="left:785.30px;top:386.14px;line-height:10.11px;">XYZ Strength</div><div class="tx" style="left:734.60px;width:200px;text-align:right;top:386.14px;line-height:10.11px;">0.500</div><svg class="a" style="left:760.10px;top:386.30px" width="10" height="10" viewBox="0 0 10 10"><circle cx="5" cy="5" r="3.05" fill="#a1a1a1" stroke="#0c0c0c" stroke-width="1.1"/></svg><div class="fd" style="left:774.10px;top:402.10px;width:171.60px;height:14.00px;overflow:hidden"></div><div class="tx" style="left:781.80px;top:403.54px;line-height:10.11px;">Individual Override</div><div class="tx" style="left:738.60px;width:200px;text-align:right;top:403.54px;line-height:10.11px;">0.000</div><svg class="a" style="left:760.10px;top:403.70px" width="10" height="10" viewBox="0 0 10 10"><circle cx="5" cy="5" r="3.05" fill="#a1a1a1" stroke="#0c0c0c" stroke-width="1.1"/></svg><div class="fd" style="left:774.10px;top:419.10px;width:171.60px;height:14.00px;overflow:hidden"></div><div class="tx" style="left:785.30px;top:420.54px;line-height:10.11px;">X Strength</div><div class="tx" style="left:734.60px;width:200px;text-align:right;top:420.54px;line-height:10.11px;">0.000</div><svg class="a" style="left:760.10px;top:420.70px" width="10" height="10" viewBox="0 0 10 10"><circle cx="5" cy="5" r="3.05" fill="#a1a1a1" stroke="#0c0c0c" stroke-width="1.1"/></svg><div class="fd" style="left:774.10px;top:437.00px;width:171.60px;height:14.00px;overflow:hidden"></div><div class="tx" style="left:785.30px;top:438.44px;line-height:10.11px;">Y Strength</div><div class="tx" style="left:734.60px;width:200px;text-align:right;top:438.44px;line-height:10.11px;">0.000</div><svg class="a" style="left:760.10px;top:438.60px" width="10" height="10" viewBox="0 0 10 10"><circle cx="5" cy="5" r="3.05" fill="#a1a1a1" stroke="#0c0c0c" stroke-width="1.1"/></svg><div class="fd" style="left:774.10px;top:454.00px;width:171.60px;height:14.00px;overflow:hidden"></div><div class="tx" style="left:785.30px;top:455.44px;line-height:10.11px;">Z Strength</div><div class="tx" style="left:734.60px;width:200px;text-align:right;top:455.44px;line-height:10.11px;">0.000</div><svg class="a" style="left:760.10px;top:455.60px" width="10" height="10" viewBox="0 0 10 10"><circle cx="5" cy="5" r="3.05" fill="#a1a1a1" stroke="#0c0c0c" stroke-width="1.1"/></svg><div class="fd" style="left:774.10px;top:469.80px;width:171.60px;height:14.00px;overflow:hidden"></div><div class="tx" style="left:781.80px;top:471.24px;line-height:10.11px;">Softness</div><div class="tx" style="left:738.60px;width:200px;text-align:right;top:471.24px;line-height:10.11px;">0.000</div><svg class="a" style="left:760.10px;top:471.40px" width="10" height="10" viewBox="0 0 10 10"><circle cx="5" cy="5" r="3.05" fill="#a1a1a1" stroke="#0c0c0c" stroke-width="1.1"/></svg><div class="fd" style="left:774.10px;top:487.20px;width:171.60px;height:14.00px;overflow:hidden"></div><div class="tx" style="left:785.30px;top:488.64px;line-height:10.11px;">W</div><div class="tx" style="left:734.60px;width:200px;text-align:right;top:488.64px;line-height:10.11px;">0.000</div><svg class="a" style="left:760.10px;top:488.80px" width="10" height="10" viewBox="0 0 10 10"><circle cx="5" cy="5" r="3.05" fill="#a1a1a1" stroke="#0c0c0c" stroke-width="1.1"/></svg><div class="fd" style="left:774.10px;top:504.20px;width:171.60px;height:14.00px;overflow:hidden"></div><div class="tx" style="left:785.30px;top:505.64px;line-height:10.11px;">Scale</div><div class="tx" style="left:734.60px;width:200px;text-align:right;top:505.64px;line-height:10.11px;">5.000</div><svg class="a" style="left:760.10px;top:505.80px" width="10" height="10" viewBox="0 0 10 10"><circle cx="5" cy="5" r="3.05" fill="#a1a1a1" stroke="#0c0c0c" stroke-width="1.1"/></svg><div class="fd" style="left:774.10px;top:520.00px;width:171.60px;height:14.00px;overflow:hidden"></div><div class="tx" style="left:785.30px;top:521.44px;line-height:10.11px;">Randomness</div><div class="tx" style="left:734.60px;width:200px;text-align:right;top:521.44px;line-height:10.11px;">1.000</div><svg class="a" style="left:760.10px;top:521.60px" width="10" height="10" viewBox="0 0 10 10"><circle cx="5" cy="5" r="3.05" fill="#a1a1a1" stroke="#0c0c0c" stroke-width="1.1"/></svg>
<div class="nd" style="left:972.20px;top:185.00px;width:186.70px;height:353.40px"><div class="hd" style="height:17.60px"></div></div><svg class="a" style="left:979.20px;top:190.60px" width="6" height="6" viewBox="0 0 6 6"><path d="M0.5 0.1 L5.5 0.1 L3 5.2 Z" fill="#cad6bd"/></svg><div class="ht" style="left:990.70px;top:187.84px;line-height:10.11px;">Chebychev Transform Distortion</div><svg class="a" style="left:1138.90px;top:185.00px" width="16" height="16" viewBox="0 0 16 16"><rect x="4.6" y="1.9" width="6.45" height="5.1" rx="1.1" fill="#e6eedb"/><rect x="5.9" y="5.1" width="3.95" height="0.8" fill="#5e6a55"/><rect x="2.9" y="8.85" width="6.6" height="5.1" rx="1.1" fill="#e2ecd6"/><rect x="4.2" y="12.2" width="3.8" height="0.75" fill="#5e6a55"/><path d="M12.3 2.9 Q13.7 3.6 13.7 6 L13.7 10.2 Q13.7 11.3 12.6 11.3 L9.6 11.3" fill="none" stroke="#aebd9e" stroke-width="1.1"/><path d="M12.0 2.6 L13.0 3.2 L12.6 4.6 Z" fill="#d8e4cc"/><path d="M9.4 10.4 L11.2 11.3 L9.4 12.2 Z" fill="#c4d2b6"/></svg><div class="tx" style="left:949.60px;width:200px;text-align:right;top:208.14px;line-height:10.11px;">Vector</div><svg class="a" style="left:1153.90px;top:207.90px" width="10" height="10" viewBox="0 0 10 10"><circle cx="5" cy="5" r="3.05" fill="#6363c7" stroke="#0c0c0c" stroke-width="1.1"/></svg><div class="tx" style="left:949.60px;width:200px;text-align:right;top:225.54px;line-height:10.11px;">Distance</div><svg class="a" style="left:1153.90px;top:225.30px" width="10" height="10" viewBox="0 0 10 10"><circle cx="5" cy="5" r="3.05" fill="#a1a1a1" stroke="#0c0c0c" stroke-width="1.1"/></svg><div class="tx" style="left:949.60px;width:200px;text-align:right;top:242.84px;line-height:10.11px;">Color</div><svg class="a" style="left:1153.90px;top:242.60px" width="10" height="10" viewBox="0 0 10 10"><circle cx="5" cy="5" r="3.05" fill="#c7c729" stroke="#0c0c0c" stroke-width="1.1"/></svg><div class="tx" style="left:949.60px;width:200px;text-align:right;top:260.44px;line-height:10.11px;">Position</div><svg class="a" style="left:1153.90px;top:260.20px" width="10" height="10" viewBox="0 0 10 10"><circle cx="5" cy="5" r="3.05" fill="#6363c7" stroke="#0c0c0c" stroke-width="1.1"/></svg><div class="tx" style="left:949.60px;width:200px;text-align:right;top:278.04px;line-height:10.11px;">W</div><svg class="a" style="left:1153.90px;top:277.80px" width="10" height="10" viewBox="0 0 10 10"><circle cx="5" cy="5" r="3.05" fill="#a1a1a1" stroke="#0c0c0c" stroke-width="1.1"/></svg><div class="a" style="left:981.20px;top:300.00px;width:168.70px;height:13.60px;background:#2b2b2b;border-radius:2.5px;box-shadow:0 1px 0 #363636"></div><div class="a" style="left:1004.90px;top:300.00px;width:129.50px;height:13.60px;background:#1d1d1d"></div><svg class="a" style="left:983.50px;top:300.80px" width="12" height="12" viewBox="0 0 12 12"><circle cx="6" cy="6" r="5" fill="#d8d8d8"/><path d="M6 1 A5 5 0 0 1 11 6 L6 6 Z" fill="#2a2a2a"/><path d="M6 6 L1 6 A5 5 0 0 0 6 11 Z" fill="#2a2a2a"/><circle cx="6" cy="6" r="4.9" fill="none" stroke="#d8d8d8" stroke-width="0.9"/></svg><svg class="a" style="left:996.50px;top:305.40px" width="6" height="4" viewBox="0 0 6 4"><path d="M0.5 0.7 L3 3.3 L5.5 0.7" fill="none" stroke="#d8d8d8" stroke-width="1.1"/></svg><div class="tx" style="left:1010.90px;top:301.14px;line-height:10.11px;">Chebychev Transform Distort…</div><div class="a" style="left:1134.60px;top:300.00px;width:15.30px;height:13.60px;background:#4772b3;border-radius:0 2.5px 2.5px 0"></div><svg class="a" style="left:1136.25px;top:300.30px" width="12" height="13" viewBox="0 0 12 13"><path d="M6 0.7 L7.2 1.6 L11 2.4 L11 6 Q11 10.3 6 12.4 Q1 10.3 1 6 L1 2.4 L4.8 1.6 Z" fill="#f4f6fa"/><path d="M3.4 6.6 L5.2 8.4 L8.8 4.6" fill="none" stroke="#4a6796" stroke-width="1.4"/></svg><div class="tx" style="left:981.20px;top:320.54px;line-height:10.11px;">Vector:</div><div class="fd" style="left:981.20px;top:335.00px;width:168.70px;height:45.60px"></div><div class="a" style="left:981.20px;top:349.10px;width:168.70px;height:1px;background:#3f3f3f"></div><div class="a" style="left:981.20px;top:364.90px;width:168.70px;height:1px;background:#3f3f3f"></div><div class="tx" style="left:979.60px;width:168.70px;text-align:center;top:336.94px;line-height:10.11px;">0.000</div><div class="tx" style="left:979.60px;width:168.70px;text-align:center;top:352.14px;line-height:10.11px;">0.000</div><div class="tx" style="left:979.60px;width:168.70px;text-align:center;top:367.64px;line-height:10.11px;">0.000</div><svg class="a" style="left:967.20px;top:345.20px" width="10" height="10" viewBox="0 0 10 10"><circle cx="5" cy="5" r="3.05" fill="#6363c7" stroke="#0c0c0c" stroke-width="1.1"/></svg><div class="fd" style="left:981.20px;top:384.70px;width:168.70px;height:14.00px;overflow:hidden"></div><div class="tx" style="left:992.40px;top:386.14px;line-height:10.11px;">XYZ Strength</div><div class="tx" style="left:938.80px;width:200px;text-align:right;top:386.14px;line-height:10.11px;">0.500</div><svg class="a" style="left:967.20px;top:386.30px" width="10" height="10" viewBox="0 0 10 10"><circle cx="5" cy="5" r="3.05" fill="#a1a1a1" stroke="#0c0c0c" stroke-width="1.1"/></svg><div class="fd" style="left:981.20px;top:402.10px;width:168.70px;height:14.00px;overflow:hidden"></div><div class="tx" style="left:988.90px;top:403.54px;line-height:10.11px;">Individual Override</div><div class="tx" style="left:942.80px;width:200px;text-align:right;top:403.54px;line-height:10.11px;">0.000</div><svg class="a" style="left:967.20px;top:403.70px" width="10" height="10" viewBox="0 0 10 10"><circle cx="5" cy="5" r="3.05" fill="#a1a1a1" stroke="#0c0c0c" stroke-width="1.1"/></svg><div class="fd" style="left:981.20px;top:419.10px;width:168.70px;height:14.00px;overflow:hidden"></div><div class="tx" style="left:992.40px;top:420.54px;line-height:10.11px;">X Strength</div><div class="tx" style="left:938.80px;width:200px;text-align:right;top:420.54px;line-height:10.11px;">0.000</div><svg class="a" style="left:967.20px;top:420.70px" width="10" height="10" viewBox="0 0 10 10"><circle cx="5" cy="5" r="3.05" fill="#a1a1a1" stroke="#0c0c0c" stroke-width="1.1"/></svg><div class="fd" style="left:981.20px;top:437.00px;width:168.70px;height:14.00px;overflow:hidden"></div><div class="tx" style="left:992.40px;top:438.44px;line-height:10.11px;">Y Strength</div><div class="tx" style="left:938.80px;width:200px;text-align:right;top:438.44px;line-height:10.11px;">0.000</div><svg class="a" style="left:967.20px;top:438.60px" width="10" height="10" viewBox="0 0 10 10"><circle cx="5" cy="5" r="3.05" fill="#a1a1a1" stroke="#0c0c0c" stroke-width="1.1"/></svg><div class="fd" style="left:981.20px;top:454.00px;width:168.70px;height:14.00px;overflow:hidden"></div><div class="tx" style="left:992.40px;top:455.44px;line-height:10.11px;">Z Strength</div><div class="tx" style="left:938.80px;width:200px;text-align:right;top:455.44px;line-height:10.11px;">0.000</div><svg class="a" style="left:967.20px;top:455.60px" width="10" height="10" viewBox="0 0 10 10"><circle cx="5" cy="5" r="3.05" fill="#a1a1a1" stroke="#0c0c0c" stroke-width="1.1"/></svg><div class="fd" style="left:981.20px;top:469.80px;width:168.70px;height:14.00px;overflow:hidden"></div><div class="tx" style="left:988.90px;top:471.24px;line-height:10.11px;">Softness</div><div class="tx" style="left:942.80px;width:200px;text-align:right;top:471.24px;line-height:10.11px;">0.000</div><svg class="a" style="left:967.20px;top:471.40px" width="10" height="10" viewBox="0 0 10 10"><circle cx="5" cy="5" r="3.05" fill="#a1a1a1" stroke="#0c0c0c" stroke-width="1.1"/></svg><div class="fd" style="left:981.20px;top:487.20px;width:168.70px;height:14.00px;overflow:hidden"></div><div class="tx" style="left:992.40px;top:488.64px;line-height:10.11px;">W</div><div class="tx" style="left:938.80px;width:200px;text-align:right;top:488.64px;line-height:10.11px;">0.000</div><svg class="a" style="left:967.20px;top:488.80px" width="10" height="10" viewBox="0 0 10 10"><circle cx="5" cy="5" r="3.05" fill="#a1a1a1" stroke="#0c0c0c" stroke-width="1.1"/></svg><div class="fd" style="left:981.20px;top:504.20px;width:168.70px;height:14.00px;overflow:hidden"></div><div class="tx" style="left:992.40px;top:505.64px;line-height:10.11px;">Scale</div><div class="tx" style="left:938.80px;width:200px;text-align:right;top:505.64px;line-height:10.11px;">5.000</div><svg class="a" style="left:967.20px;top:505.80px" width="10" height="10" viewBox="0 0 10 10"><circle cx="5" cy="5" r="3.05" fill="#a1a1a1" stroke="#0c0c0c" stroke-width="1.1"/></svg><div class="fd" style="left:981.20px;top:520.00px;width:168.70px;height:14.00px;overflow:hidden"></div><div class="tx" style="left:992.40px;top:521.44px;line-height:10.11px;">Randomness</div><div class="tx" style="left:938.80px;width:200px;text-align:right;top:521.44px;line-height:10.11px;">1.000</div><svg class="a" style="left:967.20px;top:521.60px" width="10" height="10" viewBox="0 0 10 10"><circle cx="5" cy="5" r="3.05" fill="#a1a1a1" stroke="#0c0c0c" stroke-width="1.1"/></svg>
<div class="nd" style="left:1177.80px;top:185.00px;width:186.20px;height:353.40px"><div class="hd" style="height:17.60px"></div></div><svg class="a" style="left:1184.80px;top:190.60px" width="6" height="6" viewBox="0 0 6 6"><path d="M0.5 0.1 L5.5 0.1 L3 5.2 Z" fill="#cad6bd"/></svg><div class="ht" style="left:1196.30px;top:187.84px;line-height:10.11px;">Chebychev Scale Distortion</div><svg class="a" style="left:1344.00px;top:185.00px" width="16" height="16" viewBox="0 0 16 16"><rect x="4.6" y="1.9" width="6.45" height="5.1" rx="1.1" fill="#e6eedb"/><rect x="5.9" y="5.1" width="3.95" height="0.8" fill="#5e6a55"/><rect x="2.9" y="8.85" width="6.6" height="5.1" rx="1.1" fill="#e2ecd6"/><rect x="4.2" y="12.2" width="3.8" height="0.75" fill="#5e6a55"/><path d="M12.3 2.9 Q13.7 3.6 13.7 6 L13.7 10.2 Q13.7 11.3 12.6 11.3 L9.6 11.3" fill="none" stroke="#aebd9e" stroke-width="1.1"/><path d="M12.0 2.6 L13.0 3.2 L12.6 4.6 Z" fill="#d8e4cc"/><path d="M9.4 10.4 L11.2 11.3 L9.4 12.2 Z" fill="#c4d2b6"/></svg><div class="tx" style="left:1154.70px;width:200px;text-align:right;top:208.14px;line-height:10.11px;">Vector</div><svg class="a" style="left:1359.00px;top:207.90px" width="10" height="10" viewBox="0 0 10 10"><circle cx="5" cy="5" r="3.05" fill="#6363c7" stroke="#0c0c0c" stroke-width="1.1"/></svg><div class="tx" style="left:1154.70px;width:200px;text-align:right;top:225.54px;line-height:10.11px;">Distance</div><svg class="a" style="left:1359.00px;top:225.30px" width="10" height="10" viewBox="0 0 10 10"><circle cx="5" cy="5" r="3.05" fill="#a1a1a1" stroke="#0c0c0c" stroke-width="1.1"/></svg><div class="tx" style="left:1154.70px;width:200px;text-align:right;top:242.84px;line-height:10.11px;">Color</div><svg class="a" style="left:1359.00px;top:242.60px" width="10" height="10" viewBox="0 0 10 10"><circle cx="5" cy="5" r="3.05" fill="#c7c729" stroke="#0c0c0c" stroke-width="1.1"/></svg><div class="tx" style="left:1154.70px;width:200px;text-align:right;top:260.44px;line-height:10.11px;">Position</div><svg class="a" style="left:1359.00px;top:260.20px" width="10" height="10" viewBox="0 0 10 10"><circle cx="5" cy="5" r="3.05" fill="#6363c7" stroke="#0c0c0c" stroke-width="1.1"/></svg><div class="tx" style="left:1154.70px;width:200px;text-align:right;top:278.04px;line-height:10.11px;">W</div><svg class="a" style="left:1359.00px;top:277.80px" width="10" height="10" viewBox="0 0 10 10"><circle cx="5" cy="5" r="3.05" fill="#a1a1a1" stroke="#0c0c0c" stroke-width="1.1"/></svg><div class="a" style="left:1186.80px;top:300.00px;width:168.20px;height:13.60px;background:#2b2b2b;border-radius:2.5px;box-shadow:0 1px 0 #363636"></div><div class="a" style="left:1210.50px;top:300.00px;width:129.00px;height:13.60px;background:#1d1d1d"></div><svg class="a" style="left:1189.10px;top:300.80px" width="12" height="12" viewBox="0 0 12 12"><circle cx="6" cy="6" r="5" fill="#d8d8d8"/><path d="M6 1 A5 5 0 0 1 11 6 L6 6 Z" fill="#2a2a2a"/><path d="M6 6 L1 6 A5 5 0 0 0 6 11 Z" fill="#2a2a2a"/><circle cx="6" cy="6" r="4.9" fill="none" stroke="#d8d8d8" stroke-width="0.9"/></svg><svg class="a" style="left:1202.10px;top:305.40px" width="6" height="4" viewBox="0 0 6 4"><path d="M0.5 0.7 L3 3.3 L5.5 0.7" fill="none" stroke="#d8d8d8" stroke-width="1.1"/></svg><div class="tx" style="left:1216.50px;top:301.14px;line-height:10.11px;">Chebychev Scale Distortion</div><div class="a" style="left:1339.70px;top:300.00px;width:15.30px;height:13.60px;background:#4772b3;border-radius:0 2.5px 2.5px 0"></div><svg class="a" style="left:1341.35px;top:300.30px" width="12" height="13" viewBox="0 0 12 13"><path d="M6 0.7 L7.2 1.6 L11 2.4 L11 6 Q11 10.3 6 12.4 Q1 10.3 1 6 L1 2.4 L4.8 1.6 Z" fill="#f4f6fa"/><path d="M3.4 6.6 L5.2 8.4 L8.8 4.6" fill="none" stroke="#4a6796" stroke-width="1.4"/></svg><div class="tx" style="left:1186.80px;top:320.54px;line-height:10.11px;">Vector:</div><div class="fd" style="left:1186.80px;top:335.00px;width:168.20px;height:45.60px"></div><div class="a" style="left:1186.80px;top:349.10px;width:168.20px;height:1px;background:#3f3f3f"></div><div class="a" style="left:1186.80px;top:364.90px;width:168.20px;height:1px;background:#3f3f3f"></div><div class="tx" style="left:1185.20px;width:168.20px;text-align:center;top:336.94px;line-height:10.11px;">0.000</div><div class="tx" style="left:1185.20px;width:168.20px;text-align:center;top:352.14px;line-height:10.11px;">0.000</div><div class="tx" style="left:1185.20px;width:168.20px;text-align:center;top:367.64px;line-height:10.11px;">0.000</div><svg class="a" style="left:1172.80px;top:345.20px" width="10" height="10" viewBox="0 0 10 10"><circle cx="5" cy="5" r="3.05" fill="#6363c7" stroke="#0c0c0c" stroke-width="1.1"/></svg><div class="fd" style="left:1186.80px;top:384.70px;width:168.20px;height:14.00px;overflow:hidden"></div><div class="tx" style="left:1198.00px;top:386.14px;line-height:10.11px;">XYZ Strength</div><div class="tx" style="left:1143.90px;width:200px;text-align:right;top:386.14px;line-height:10.11px;">0.500</div><svg class="a" style="left:1172.80px;top:386.30px" width="10" height="10" viewBox="0 0 10 10"><circle cx="5" cy="5" r="3.05" fill="#a1a1a1" stroke="#0c0c0c" stroke-width="1.1"/></svg><div class="fd" style="left:1186.80px;top:402.10px;width:168.20px;height:14.00px;overflow:hidden"></div><div class="tx" style="left:1194.50px;top:403.54px;line-height:10.11px;">Individual Override</div><div class="tx" style="left:1147.90px;width:200px;text-align:right;top:403.54px;line-height:10.11px;">0.000</div><svg class="a" style="left:1172.80px;top:403.70px" width="10" height="10" viewBox="0 0 10 10"><circle cx="5" cy="5" r="3.05" fill="#a1a1a1" stroke="#0c0c0c" stroke-width="1.1"/></svg><div class="fd" style="left:1186.80px;top:419.10px;width:168.20px;height:14.00px;overflow:hidden"></div><div class="tx" style="left:1198.00px;top:420.54px;line-height:10.11px;">X Strength</div><div class="tx" style="left:1143.90px;width:200px;text-align:right;top:420.54px;line-height:10.11px;">0.000</div><svg class="a" style="left:1172.80px;top:420.70px" width="10" height="10" viewBox="0 0 10 10"><circle cx="5" cy="5" r="3.05" fill="#a1a1a1" stroke="#0c0c0c" stroke-width="1.1"/></svg><div class="fd" style="left:1186.80px;top:437.00px;width:168.20px;height:14.00px;overflow:hidden"></div><div class="tx" style="left:1198.00px;top:438.44px;line-height:10.11px;">Y Strength</div><div class="tx" style="left:1143.90px;width:200px;text-align:right;top:438.44px;line-height:10.11px;">0.000</div><svg class="a" style="left:1172.80px;top:438.60px" width="10" height="10" viewBox="0 0 10 10"><circle cx="5" cy="5" r="3.05" fill="#a1a1a1" stroke="#0c0c0c" stroke-width="1.1"/></svg><div class="fd" style="left:1186.80px;top:454.00px;width:168.20px;height:14.00px;overflow:hidden"></div><div class="tx" style="left:1198.00px;top:455.44px;line-height:10.11px;">Z Strength</div><div class="tx" style="left:1143.90px;width:200px;text-align:right;top:455.44px;line-height:10.11px;">0.000</div><svg class="a" style="left:1172.80px;top:455.60px" width="10" height="10" viewBox="0 0 10 10"><circle cx="5" cy="5" r="3.05" fill="#a1a1a1" stroke="#0c0c0c" stroke-width="1.1"/></svg><div class="fd" style="left:1186.80px;top:469.80px;width:168.20px;height:14.00px;overflow:hidden"></div><div class="tx" style="left:1194.50px;top:471.24px;line-height:10.11px;">Softness</div><div class="tx" style="left:1147.90px;width:200px;text-align:right;top:471.24px;line-height:10.11px;">0.000</div><svg class="a" style="left:1172.80px;top:471.40px" width="10" height="10" viewBox="0 0 10 10"><circle cx="5" cy="5" r="3.05" fill="#a1a1a1" stroke="#0c0c0c" stroke-width="1.1"/></svg><div class="fd" style="left:1186.80px;top:487.20px;width:168.20px;height:14.00px;overflow:hidden"></div><div class="tx" style="left:1198.00px;top:488.64px;line-height:10.11px;">W</div><div class="tx" style="left:1143.90px;width:200px;text-align:right;top:488.64px;line-height:10.11px;">0.000</div><svg class="a" style="left:1172.80px;top:488.80px" width="10" height="10" viewBox="0 0 10 10"><circle cx="5" cy="5" r="3.05" fill="#a1a1a1" stroke="#0c0c0c" stroke-width="1.1"/></svg><div class="fd" style="left:1186.80px;top:504.20px;width:168.20px;height:14.00px;overflow:hidden"></div><div class="tx" style="left:1198.00px;top:505.64px;line-height:10.11px;">Scale</div><div class="tx" style="left:1143.90px;width:200px;text-align:right;top:505.64px;line-height:10.11px;">5.000</div><svg class="a" style="left:1172.80px;top:505.80px" width="10" height="10" viewBox="0 0 10 10"><circle cx="5" cy="5" r="3.05" fill="#a1a1a1" stroke="#0c0c0c" stroke-width="1.1"/></svg><div class="fd" style="left:1186.80px;top:520.00px;width:168.20px;height:14.00px;overflow:hidden"></div><div class="tx" style="left:1198.00px;top:521.44px;line-height:10.11px;">Randomness</div><div class="tx" style="left:1143.90px;width:200px;text-align:right;top:521.44px;line-height:10.11px;">1.000</div><svg class="a" style="left:1172.80px;top:521.60px" width="10" height="10" viewBox="0 0 10 10"><circle cx="5" cy="5" r="3.05" fill="#a1a1a1" stroke="#0c0c0c" stroke-width="1.1"/></svg>
<div class="nd" style="left:559.00px;top:550.20px;width:185.70px;height:348.00px"><div class="hd" style="height:17.20px"></div></div><svg class="a" style="left:566.00px;top:555.80px" width="6" height="6" viewBox="0 0 6 6"><path d="M0.5 0.1 L5.5 0.1 L3 5.2 Z" fill="#cad6bd"/></svg><div class="ht" style="left:577.50px;top:552.74px;line-height:10.11px;">Manhattan Transform Distortion</div><svg class="a" style="left:724.70px;top:550.20px" width="16" height="16" viewBox="0 0 16 16"><rect x="4.6" y="1.9" width="6.45" height="5.1" rx="1.1" fill="#e6eedb"/><rect x="5.9" y="5.1" width="3.95" height="0.8" fill="#5e6a55"/><rect x="2.9" y="8.85" width="6.6" height="5.1" rx="1.1" fill="#e2ecd6"/><rect x="4.2" y="12.2" width="3.8" height="0.75" fill="#5e6a55"/><path d="M12.3 2.9 Q13.7 3.6 13.7 6 L13.7 10.2 Q13.7 11.3 12.6 11.3 L9.6 11.3" fill="none" stroke="#aebd9e" stroke-width="1.1"/><path d="M12.0 2.6 L13.0 3.2 L12.6 4.6 Z" fill="#d8e4cc"/><path d="M9.4 10.4 L11.2 11.3 L9.4 12.2 Z" fill="#c4d2b6"/></svg><div class="tx" style="left:535.40px;width:200px;text-align:right;top:573.14px;line-height:10.11px;">Vector</div><svg class="a" style="left:739.70px;top:572.90px" width="10" height="10" viewBox="0 0 10 10"><circle cx="5" cy="5" r="3.05" fill="#6363c7" stroke="#0c0c0c" stroke-width="1.1"/></svg><div class="tx" style="left:535.40px;width:200px;text-align:right;top:590.04px;line-height:10.11px;">Distance</div><svg class="a" style="left:739.70px;top:589.80px" width="10" height="10" viewBox="0 0 10 10"><circle cx="5" cy="5" r="3.05" fill="#a1a1a1" stroke="#0c0c0c" stroke-width="1.1"/></svg><div class="tx" style="left:535.40px;width:200px;text-align:right;top:606.64px;line-height:10.11px;">Color</div><svg class="a" style="left:739.70px;top:606.40px" width="10" height="10" viewBox="0 0 10 10"><circle cx="5" cy="5" r="3.05" fill="#c7c729" stroke="#0c0c0c" stroke-width="1.1"/></svg><div class="tx" style="left:535.40px;width:200px;text-align:right;top:623.14px;line-height:10.11px;">Position</div><svg class="a" style="left:739.70px;top:622.90px" width="10" height="10" viewBox="0 0 10 10"><circle cx="5" cy="5" r="3.05" fill="#6363c7" stroke="#0c0c0c" stroke-width="1.1"/></svg><div class="tx" style="left:535.40px;width:200px;text-align:right;top:639.74px;line-height:10.11px;">W</div><svg class="a" style="left:739.70px;top:639.50px" width="10" height="10" viewBox="0 0 10 10"><circle cx="5" cy="5" r="3.05" fill="#a1a1a1" stroke="#0c0c0c" stroke-width="1.1"/></svg><div class="a" style="left:568.00px;top:661.90px;width:167.70px;height:14.00px;background:#2b2b2b;border-radius:2.5px;box-shadow:0 1px 0 #363636"></div><div class="a" style="left:591.70px;top:661.90px;width:128.50px;height:14.00px;background:#1d1d1d"></div><svg class="a" style="left:570.30px;top:662.90px" width="12" height="12" viewBox="0 0 12 12"><circle cx="6" cy="6" r="5" fill="#d8d8d8"/><path d="M6 1 A5 5 0 0 1 11 6 L6 6 Z" fill="#2a2a2a"/><path d="M6 6 L1 6 A5 5 0 0 0 6 11 Z" fill="#2a2a2a"/><circle cx="6" cy="6" r="4.9" fill="none" stroke="#d8d8d8" stroke-width="0.9"/></svg><svg class="a" style="left:583.30px;top:667.50px" width="6" height="4" viewBox="0 0 6 4"><path d="M0.5 0.7 L3 3.3 L5.5 0.7" fill="none" stroke="#d8d8d8" stroke-width="1.1"/></svg><div class="tx" style="left:597.70px;top:664.14px;line-height:10.11px;">Manhattan Transform Distorti…</div><div class="a" style="left:720.40px;top:661.90px;width:15.30px;height:14.00px;background:#4772b3;border-radius:0 2.5px 2.5px 0"></div><svg class="a" style="left:722.05px;top:662.40px" width="12" height="13" viewBox="0 0 12 13"><path d="M6 0.7 L7.2 1.6 L11 2.4 L11 6 Q11 10.3 6 12.4 Q1 10.3 1 6 L1 2.4 L4.8 1.6 Z" fill="#f4f6fa"/><path d="M3.4 6.6 L5.2 8.4 L8.8 4.6" fill="none" stroke="#4a6796" stroke-width="1.4"/></svg><div class="tx" style="left:568.00px;top:683.14px;line-height:10.11px;">Vector:</div><div class="fd" style="left:568.00px;top:696.70px;width:167.70px;height:45.80px"></div><div class="a" style="left:568.00px;top:711.00px;width:167.70px;height:1px;background:#3f3f3f"></div><div class="a" style="left:568.00px;top:726.70px;width:167.70px;height:1px;background:#3f3f3f"></div><div class="tx" style="left:566.40px;width:167.70px;text-align:center;top:698.74px;line-height:10.11px;">0.000</div><div class="tx" style="left:566.40px;width:167.70px;text-align:center;top:713.99px;line-height:10.11px;">0.000</div><div class="tx" style="left:566.40px;width:167.70px;text-align:center;top:729.49px;line-height:10.11px;">0.000</div><svg class="a" style="left:554.00px;top:707.20px" width="10" height="10" viewBox="0 0 10 10"><circle cx="5" cy="5" r="3.05" fill="#6363c7" stroke="#0c0c0c" stroke-width="1.1"/></svg><div class="fd" style="left:568.00px;top:745.90px;width:167.70px;height:14.00px;overflow:hidden"></div><div class="tx" style="left:579.20px;top:747.94px;line-height:10.11px;">XYZ Strength</div><div class="tx" style="left:524.60px;width:200px;text-align:right;top:747.94px;line-height:10.11px;">0.500</div><svg class="a" style="left:554.00px;top:747.50px" width="10" height="10" viewBox="0 0 10 10"><circle cx="5" cy="5" r="3.05" fill="#a1a1a1" stroke="#0c0c0c" stroke-width="1.1"/></svg><div class="fd" style="left:568.00px;top:762.10px;width:167.70px;height:14.00px;overflow:hidden"></div><div class="tx" style="left:575.70px;top:764.14px;line-height:10.11px;">Individual Override</div><div class="tx" style="left:528.60px;width:200px;text-align:right;top:764.14px;line-height:10.11px;">0.000</div><svg class="a" style="left:554.00px;top:763.70px" width="10" height="10" viewBox="0 0 10 10"><circle cx="5" cy="5" r="3.05" fill="#a1a1a1" stroke="#0c0c0c" stroke-width="1.1"/></svg><div class="fd" style="left:568.00px;top:778.80px;width:167.70px;height:14.00px;overflow:hidden"></div><div class="tx" style="left:579.20px;top:780.84px;line-height:10.11px;">X Strength</div><div class="tx" style="left:524.60px;width:200px;text-align:right;top:780.84px;line-height:10.11px;">0.000</div><svg class="a" style="left:554.00px;top:780.40px" width="10" height="10" viewBox="0 0 10 10"><circle cx="5" cy="5" r="3.05" fill="#a1a1a1" stroke="#0c0c0c" stroke-width="1.1"/></svg><div class="fd" style="left:568.00px;top:795.30px;width:167.70px;height:14.00px;overflow:hidden"></div><div class="tx" style="left:579.20px;top:797.34px;line-height:10.11px;">Y Strength</div><div class="tx" style="left:524.60px;width:200px;text-align:right;top:797.34px;line-height:10.11px;">0.000</div><svg class="a" style="left:554.00px;top:796.90px" width="10" height="10" viewBox="0 0 10 10"><circle cx="5" cy="5" r="3.05" fill="#a1a1a1" stroke="#0c0c0c" stroke-width="1.1"/></svg><div class="fd" style="left:568.00px;top:811.90px;width:167.70px;height:14.00px;overflow:hidden"></div><div class="tx" style="left:579.20px;top:813.94px;line-height:10.11px;">Z Strength</div><div class="tx" style="left:524.60px;width:200px;text-align:right;top:813.94px;line-height:10.11px;">0.000</div><svg class="a" style="left:554.00px;top:813.50px" width="10" height="10" viewBox="0 0 10 10"><circle cx="5" cy="5" r="3.05" fill="#a1a1a1" stroke="#0c0c0c" stroke-width="1.1"/></svg><div class="fd" style="left:568.00px;top:828.50px;width:167.70px;height:14.00px;overflow:hidden"></div><div class="tx" style="left:575.70px;top:830.54px;line-height:10.11px;">Softness</div><div class="tx" style="left:528.60px;width:200px;text-align:right;top:830.54px;line-height:10.11px;">0.000</div><svg class="a" style="left:554.00px;top:830.10px" width="10" height="10" viewBox="0 0 10 10"><circle cx="5" cy="5" r="3.05" fill="#a1a1a1" stroke="#0c0c0c" stroke-width="1.1"/></svg><div class="fd" style="left:568.00px;top:845.80px;width:167.70px;height:14.00px;overflow:hidden"></div><div class="tx" style="left:579.20px;top:847.84px;line-height:10.11px;">W</div><div class="tx" style="left:524.60px;width:200px;text-align:right;top:847.84px;line-height:10.11px;">0.000</div><svg class="a" style="left:554.00px;top:847.40px" width="10" height="10" viewBox="0 0 10 10"><circle cx="5" cy="5" r="3.05" fill="#a1a1a1" stroke="#0c0c0c" stroke-width="1.1"/></svg><div class="fd" style="left:568.00px;top:862.40px;width:167.70px;height:14.00px;overflow:hidden"></div><div class="tx" style="left:579.20px;top:864.44px;line-height:10.11px;">Scale</div><div class="tx" style="left:524.60px;width:200px;text-align:right;top:864.44px;line-height:10.11px;">5.000</div><svg class="a" style="left:554.00px;top:864.00px" width="10" height="10" viewBox="0 0 10 10"><circle cx="5" cy="5" r="3.05" fill="#a1a1a1" stroke="#0c0c0c" stroke-width="1.1"/></svg><div class="fd" style="left:568.00px;top:879.00px;width:167.70px;height:14.00px;overflow:hidden"></div><div class="tx" style="left:579.20px;top:881.04px;line-height:10.11px;">Randomness</div><div class="tx" style="left:524.60px;width:200px;text-align:right;top:881.04px;line-height:10.11px;">1.000</div><svg class="a" style="left:554.00px;top:880.60px" width="10" height="10" viewBox="0 0 10 10"><circle cx="5" cy="5" r="3.05" fill="#a1a1a1" stroke="#0c0c0c" stroke-width="1.1"/></svg>
<div class="nd" style="left:765.10px;top:550.20px;width:186.90px;height:348.00px"><div class="hd" style="height:17.20px"></div></div><svg class="a" style="left:772.10px;top:555.80px" width="6" height="6" viewBox="0 0 6 6"><path d="M0.5 0.1 L5.5 0.1 L3 5.2 Z" fill="#cad6bd"/></svg><div class="ht" style="left:783.60px;top:552.74px;line-height:10.11px;">Manhattan Scale Distortion</div><svg class="a" style="left:932.00px;top:550.20px" width="16" height="16" viewBox="0 0 16 16"><rect x="4.6" y="1.9" width="6.45" height="5.1" rx="1.1" fill="#e6eedb"/><rect x="5.9" y="5.1" width="3.95" height="0.8" fill="#5e6a55"/><rect x="2.9" y="8.85" width="6.6" height="5.1" rx="1.1" fill="#e2ecd6"/><rect x="4.2" y="12.2" width="3.8" height="0.75" fill="#5e6a55"/><path d="M12.3 2.9 Q13.7 3.6 13.7 6 L13.7 10.2 Q13.7 11.3 12.6 11.3 L9.6 11.3" fill="none" stroke="#aebd9e" stroke-width="1.1"/><path d="M12.0 2.6 L13.0 3.2 L12.6 4.6 Z" fill="#d8e4cc"/><path d="M9.4 10.4 L11.2 11.3 L9.4 12.2 Z" fill="#c4d2b6"/></svg><div class="tx" style="left:742.70px;width:200px;text-align:right;top:573.14px;line-height:10.11px;">Vector</div><svg class="a" style="left:947.00px;top:572.90px" width="10" height="10" viewBox="0 0 10 10"><circle cx="5" cy="5" r="3.05" fill="#6363c7" stroke="#0c0c0c" stroke-width="1.1"/></svg><div class="tx" style="left:742.70px;width:200px;text-align:right;top:590.04px;line-height:10.11px;">Distance</div><svg class="a" style="left:947.00px;top:589.80px" width="10" height="10" viewBox="0 0 10 10"><circle cx="5" cy="5" r="3.05" fill="#a1a1a1" stroke="#0c0c0c" stroke-width="1.1"/></svg><div class="tx" style="left:742.70px;width:200px;text-align:right;top:606.64px;line-height:10.11px;">Color</div><svg class="a" style="left:947.00px;top:606.40px" width="10" height="10" viewBox="0 0 10 10"><circle cx="5" cy="5" r="3.05" fill="#c7c729" stroke="#0c0c0c" stroke-width="1.1"/></svg><div class="tx" style="left:742.70px;width:200px;text-align:right;top:623.14px;line-height:10.11px;">Position</div><svg class="a" style="left:947.00px;top:622.90px" width="10" height="10" viewBox="0 0 10 10"><circle cx="5" cy="5" r="3.05" fill="#6363c7" stroke="#0c0c0c" stroke-width="1.1"/></svg><div class="tx" style="left:742.70px;width:200px;text-align:right;top:639.74px;line-height:10.11px;">W</div><svg class="a" style="left:947.00px;top:639.50px" width="10" height="10" viewBox="0 0 10 10"><circle cx="5" cy="5" r="3.05" fill="#a1a1a1" stroke="#0c0c0c" stroke-width="1.1"/></svg><div class="a" style="left:774.10px;top:661.90px;width:168.90px;height:14.00px;background:#2b2b2b;border-radius:2.5px;box-shadow:0 1px 0 #363636"></div><div class="a" style="left:797.80px;top:661.90px;width:129.70px;height:14.00px;background:#1d1d1d"></div><svg class="a" style="left:776.40px;top:662.90px" width="12" height="12" viewBox="0 0 12 12"><circle cx="6" cy="6" r="5" fill="#d8d8d8"/><path d="M6 1 A5 5 0 0 1 11 6 L6 6 Z" fill="#2a2a2a"/><path d="M6 6 L1 6 A5 5 0 0 0 6 11 Z" fill="#2a2a2a"/><circle cx="6" cy="6" r="4.9" fill="none" stroke="#d8d8d8" stroke-width="0.9"/></svg><svg class="a" style="left:789.40px;top:667.50px" width="6" height="4" viewBox="0 0 6 4"><path d="M0.5 0.7 L3 3.3 L5.5 0.7" fill="none" stroke="#d8d8d8" stroke-width="1.1"/></svg><div class="tx" style="left:803.80px;top:664.14px;line-height:10.11px;">Manhattan Scale Distortion</div><div class="a" style="left:927.70px;top:661.90px;width:15.30px;height:14.00px;background:#4772b3;border-radius:0 2.5px 2.5px 0"></div><svg class="a" style="left:929.35px;top:662.40px" width="12" height="13" viewBox="0 0 12 13"><path d="M6 0.7 L7.2 1.6 L11 2.4 L11 6 Q11 10.3 6 12.4 Q1 10.3 1 6 L1 2.4 L4.8 1.6 Z" fill="#f4f6fa"/><path d="M3.4 6.6 L5.2 8.4 L8.8 4.6" fill="none" stroke="#4a6796" stroke-width="1.4"/></svg><div class="tx" style="left:774.10px;top:683.14px;line-height:10.11px;">Vector:</div><div class="fd" style="left:774.10px;top:696.70px;width:168.90px;height:45.80px"></div><div class="a" style="left:774.10px;top:711.00px;width:168.90px;height:1px;background:#3f3f3f"></div><div class="a" style="left:774.10px;top:726.70px;width:168.90px;height:1px;background:#3f3f3f"></div><div class="tx" style="left:772.50px;width:168.90px;text-align:center;top:698.74px;line-height:10.11px;">0.000</div><div class="tx" style="left:772.50px;width:168.90px;text-align:center;top:713.99px;line-height:10.11px;">0.000</div><div class="tx" style="left:772.50px;width:168.90px;text-align:center;top:729.49px;line-height:10.11px;">0.000</div><svg class="a" style="left:760.10px;top:707.20px" width="10" height="10" viewBox="0 0 10 10"><circle cx="5" cy="5" r="3.05" fill="#6363c7" stroke="#0c0c0c" stroke-width="1.1"/></svg><div class="fd" style="left:774.10px;top:745.90px;width:168.90px;height:14.00px;overflow:hidden"></div><div class="tx" style="left:785.30px;top:747.94px;line-height:10.11px;">XYZ Strength</div><div class="tx" style="left:731.90px;width:200px;text-align:right;top:747.94px;line-height:10.11px;">0.500</div><svg class="a" style="left:760.10px;top:747.50px" width="10" height="10" viewBox="0 0 10 10"><circle cx="5" cy="5" r="3.05" fill="#a1a1a1" stroke="#0c0c0c" stroke-width="1.1"/></svg><div class="fd" style="left:774.10px;top:762.10px;width:168.90px;height:14.00px;overflow:hidden"></div><div class="tx" style="left:781.80px;top:764.14px;line-height:10.11px;">Individual Override</div><div class="tx" style="left:735.90px;width:200px;text-align:right;top:764.14px;line-height:10.11px;">0.000</div><svg class="a" style="left:760.10px;top:763.70px" width="10" height="10" viewBox="0 0 10 10"><circle cx="5" cy="5" r="3.05" fill="#a1a1a1" stroke="#0c0c0c" stroke-width="1.1"/></svg><div class="fd" style="left:774.10px;top:778.80px;width:168.90px;height:14.00px;overflow:hidden"></div><div class="tx" style="left:785.30px;top:780.84px;line-height:10.11px;">X Strength</div><div class="tx" style="left:731.90px;width:200px;text-align:right;top:780.84px;line-height:10.11px;">0.000</div><svg class="a" style="left:760.10px;top:780.40px" width="10" height="10" viewBox="0 0 10 10"><circle cx="5" cy="5" r="3.05" fill="#a1a1a1" stroke="#0c0c0c" stroke-width="1.1"/></svg><div class="fd" style="left:774.10px;top:795.30px;width:168.90px;height:14.00px;overflow:hidden"></div><div class="tx" style="left:785.30px;top:797.34px;line-height:10.11px;">Y Strength</div><div class="tx" style="left:731.90px;width:200px;text-align:right;top:797.34px;line-height:10.11px;">0.000</div><svg class="a" style="left:760.10px;top:796.90px" width="10" height="10" viewBox="0 0 10 10"><circle cx="5" cy="5" r="3.05" fill="#a1a1a1" stroke="#0c0c0c" stroke-width="1.1"/></svg><div class="fd" style="left:774.10px;top:811.90px;width:168.90px;height:14.00px;overflow:hidden"></div><div class="tx" style="left:785.30px;top:813.94px;line-height:10.11px;">Z Strength</div><div class="tx" style="left:731.90px;width:200px;text-align:right;top:813.94px;line-height:10.11px;">0.000</div><svg class="a" style="left:760.10px;top:813.50px" width="10" height="10" viewBox="0 0 10 10"><circle cx="5" cy="5" r="3.05" fill="#a1a1a1" stroke="#0c0c0c" stroke-width="1.1"/></svg><div class="fd" style="left:774.10px;top:828.50px;width:168.90px;height:14.00px;overflow:hidden"></div><div class="tx" style="left:781.80px;top:830.54px;line-height:10.11px;">Softness</div><div class="tx" style="left:735.90px;width:200px;text-align:right;top:830.54px;line-height:10.11px;">0.000</div><svg class="a" style="left:760.10px;top:830.10px" width="10" height="10" viewBox="0 0 10 10"><circle cx="5" cy="5" r="3.05" fill="#a1a1a1" stroke="#0c0c0c" stroke-width="1.1"/></svg><div class="fd" style="left:774.10px;top:845.80px;width:168.90px;height:14.00px;overflow:hidden"></div><div class="tx" style="left:785.30px;top:847.84px;line-height:10.11px;">W</div><div class="tx" style="left:731.90px;width:200px;text-align:right;top:847.84px;line-height:10.11px;">0.000</div><svg class="a" style="left:760.10px;top:847.40px" width="10" height="10" viewBox="0 0 10 10"><circle cx="5" cy="5" r="3.05" fill="#a1a1a1" stroke="#0c0c0c" stroke-width="1.1"/></svg><div class="fd" style="left:774.10px;top:862.40px;width:168.90px;height:14.00px;overflow:hidden"></div><div class="tx" style="left:785.30px;top:864.44px;line-height:10.11px;">Scale</div><div class="tx" style="left:731.90px;width:200px;text-align:right;top:864.44px;line-height:10.11px;">5.000</div><svg class="a" style="left:760.10px;top:864.00px" width="10" height="10" viewBox="0 0 10 10"><circle cx="5" cy="5" r="3.05" fill="#a1a1a1" stroke="#0c0c0c" stroke-width="1.1"/></svg><div class="fd" style="left:774.10px;top:879.00px;width:168.90px;height:14.00px;overflow:hidden"></div><div class="tx" style="left:785.30px;top:881.04px;line-height:10.11px;">Randomness</div><div class="tx" style="left:731.90px;width:200px;text-align:right;top:881.04px;line-height:10.11px;">1.000</div><svg class="a" style="left:760.10px;top:880.60px" width="10" height="10" viewBox="0 0 10 10"><circle cx="5" cy="5" r="3.05" fill="#a1a1a1" stroke="#0c0c0c" stroke-width="1.1"/></svg>
<div class="nd" style="left:972.20px;top:550.20px;width:182.70px;height:348.00px"><div class="hd" style="height:17.20px"></div></div><svg class="a" style="left:979.20px;top:555.80px" width="6" height="6" viewBox="0 0 6 6"><path d="M0.5 0.1 L5.5 0.1 L3 5.2 Z" fill="#cad6bd"/></svg><div class="ht" style="left:990.70px;top:552.74px;line-height:10.11px;">Minkowski Transform Distortion</div><svg class="a" style="left:1134.90px;top:550.20px" width="16" height="16" viewBox="0 0 16 16"><rect x="4.6" y="1.9" width="6.45" height="5.1" rx="1.1" fill="#e6eedb"/><rect x="5.9" y="5.1" width="3.95" height="0.8" fill="#5e6a55"/><rect x="2.9" y="8.85" width="6.6" height="5.1" rx="1.1" fill="#e2ecd6"/><rect x="4.2" y="12.2" width="3.8" height="0.75" fill="#5e6a55"/><path d="M12.3 2.9 Q13.7 3.6 13.7 6 L13.7 10.2 Q13.7 11.3 12.6 11.3 L9.6 11.3" fill="none" stroke="#aebd9e" stroke-width="1.1"/><path d="M12.0 2.6 L13.0 3.2 L12.6 4.6 Z" fill="#d8e4cc"/><path d="M9.4 10.4 L11.2 11.3 L9.4 12.2 Z" fill="#c4d2b6"/></svg><div class="tx" style="left:945.60px;width:200px;text-align:right;top:573.14px;line-height:10.11px;">Vector</div><svg class="a" style="left:1149.90px;top:572.90px" width="10" height="10" viewBox="0 0 10 10"><circle cx="5" cy="5" r="3.05" fill="#6363c7" stroke="#0c0c0c" stroke-width="1.1"/></svg><div class="tx" style="left:945.60px;width:200px;text-align:right;top:590.04px;line-height:10.11px;">Distance</div><svg class="a" style="left:1149.90px;top:589.80px" width="10" height="10" viewBox="0 0 10 10"><circle cx="5" cy="5" r="3.05" fill="#a1a1a1" stroke="#0c0c0c" stroke-width="1.1"/></svg><div class="tx" style="left:945.60px;width:200px;text-align:right;top:606.64px;line-height:10.11px;">Color</div><svg class="a" style="left:1149.90px;top:606.40px" width="10" height="10" viewBox="0 0 10 10"><circle cx="5" cy="5" r="3.05" fill="#c7c729" stroke="#0c0c0c" stroke-width="1.1"/></svg><div class="tx" style="left:945.60px;width:200px;text-align:right;top:623.14px;line-height:10.11px;">Position</div><svg class="a" style="left:1149.90px;top:622.90px" width="10" height="10" viewBox="0 0 10 10"><circle cx="5" cy="5" r="3.05" fill="#6363c7" stroke="#0c0c0c" stroke-width="1.1"/></svg><div class="tx" style="left:945.60px;width:200px;text-align:right;top:639.74px;line-height:10.11px;">W</div><svg class="a" style="left:1149.90px;top:639.50px" width="10" height="10" viewBox="0 0 10 10"><circle cx="5" cy="5" r="3.05" fill="#a1a1a1" stroke="#0c0c0c" stroke-width="1.1"/></svg><div class="a" style="left:981.20px;top:661.90px;width:164.70px;height:14.00px;background:#2b2b2b;border-radius:2.5px;box-shadow:0 1px 0 #363636"></div><div class="a" style="left:1004.90px;top:661.90px;width:125.50px;height:14.00px;background:#1d1d1d"></div><svg class="a" style="left:983.50px;top:662.90px" width="12" height="12" viewBox="0 0 12 12"><circle cx="6" cy="6" r="5" fill="#d8d8d8"/><path d="M6 1 A5 5 0 0 1 11 6 L6 6 Z" fill="#2a2a2a"/><path d="M6 6 L1 6 A5 5 0 0 0 6 11 Z" fill="#2a2a2a"/><circle cx="6" cy="6" r="4.9" fill="none" stroke="#d8d8d8" stroke-width="0.9"/></svg><svg class="a" style="left:996.50px;top:667.50px" width="6" height="4" viewBox="0 0 6 4"><path d="M0.5 0.7 L3 3.3 L5.5 0.7" fill="none" stroke="#d8d8d8" stroke-width="1.1"/></svg><div class="tx" style="left:1010.90px;top:664.14px;line-height:10.11px;">Minkowski Transform Distort…</div><div class="a" style="left:1130.60px;top:661.90px;width:15.30px;height:14.00px;background:#4772b3;border-radius:0 2.5px 2.5px 0"></div><svg class="a" style="left:1132.25px;top:662.40px" width="12" height="13" viewBox="0 0 12 13"><path d="M6 0.7 L7.2 1.6 L11 2.4 L11 6 Q11 10.3 6 12.4 Q1 10.3 1 6 L1 2.4 L4.8 1.6 Z" fill="#f4f6fa"/><path d="M3.4 6.6 L5.2 8.4 L8.8 4.6" fill="none" stroke="#4a6796" stroke-width="1.4"/></svg><div class="tx" style="left:981.20px;top:683.14px;line-height:10.11px;">Vector:</div><div class="fd" style="left:981.20px;top:696.70px;width:164.70px;height:45.80px"></div><div class="a" style="left:981.20px;top:711.00px;width:164.70px;height:1px;background:#3f3f3f"></div><div class="a" style="left:981.20px;top:726.70px;width:164.70px;height:1px;background:#3f3f3f"></div><div class="tx" style="left:979.60px;width:164.70px;text-align:center;top:698.74px;line-height:10.11px;">0.000</div><div class="tx" style="left:979.60px;width:164.70px;text-align:center;top:713.99px;line-height:10.11px;">0.000</div><div class="tx" style="left:979.60px;width:164.70px;text-align:center;top:729.49px;line-height:10.11px;">0.000</div><svg class="a" style="left:967.20px;top:707.20px" width="10" height="10" viewBox="0 0 10 10"><circle cx="5" cy="5" r="3.05" fill="#6363c7" stroke="#0c0c0c" stroke-width="1.1"/></svg><div class="fd" style="left:981.20px;top:745.90px;width:164.70px;height:14.00px;overflow:hidden"></div><div class="tx" style="left:992.40px;top:747.94px;line-height:10.11px;">XYZ Strength</div><div class="tx" style="left:934.80px;width:200px;text-align:right;top:747.94px;line-height:10.11px;">0.500</div><svg class="a" style="left:967.20px;top:747.50px" width="10" height="10" viewBox="0 0 10 10"><circle cx="5" cy="5" r="3.05" fill="#a1a1a1" stroke="#0c0c0c" stroke-width="1.1"/></svg><div class="fd" style="left:981.20px;top:762.10px;width:164.70px;height:14.00px;overflow:hidden"></div><div class="tx" style="left:988.90px;top:764.14px;line-height:10.11px;">Individual Override</div><div class="tx" style="left:938.80px;width:200px;text-align:right;top:764.14px;line-height:10.11px;">0.000</div><svg class="a" style="left:967.20px;top:763.70px" width="10" height="10" viewBox="0 0 10 10"><circle cx="5" cy="5" r="3.05" fill="#a1a1a1" stroke="#0c0c0c" stroke-width="1.1"/></svg><div class="fd" style="left:981.20px;top:778.80px;width:164.70px;height:14.00px;overflow:hidden"></div><div class="tx" style="left:992.40px;top:780.84px;line-height:10.11px;">X Strength</div><div class="tx" style="left:934.80px;width:200px;text-align:right;top:780.84px;line-height:10.11px;">0.000</div><svg class="a" style="left:967.20px;top:780.40px" width="10" height="10" viewBox="0 0 10 10"><circle cx="5" cy="5" r="3.05" fill="#a1a1a1" stroke="#0c0c0c" stroke-width="1.1"/></svg><div class="fd" style="left:981.20px;top:795.30px;width:164.70px;height:14.00px;overflow:hidden"></div><div class="tx" style="left:992.40px;top:797.34px;line-height:10.11px;">Y Strength</div><div class="tx" style="left:934.80px;width:200px;text-align:right;top:797.34px;line-height:10.11px;">0.000</div><svg class="a" style="left:967.20px;top:796.90px" width="10" height="10" viewBox="0 0 10 10"><circle cx="5" cy="5" r="3.05" fill="#a1a1a1" stroke="#0c0c0c" stroke-width="1.1"/></svg><div class="fd" style="left:981.20px;top:811.90px;width:164.70px;height:14.00px;overflow:hidden"></div><div class="tx" style="left:992.40px;top:813.94px;line-height:10.11px;">Z Strength</div><div class="tx" style="left:934.80px;width:200px;text-align:right;top:813.94px;line-height:10.11px;">0.000</div><svg class="a" style="left:967.20px;top:813.50px" width="10" height="10" viewBox="0 0 10 10"><circle cx="5" cy="5" r="3.05" fill="#a1a1a1" stroke="#0c0c0c" stroke-width="1.1"/></svg><div class="fd" style="left:981.20px;top:828.50px;width:164.70px;height:14.00px;overflow:hidden"></div><div class="tx" style="left:988.90px;top:830.54px;line-height:10.11px;">Softness</div><div class="tx" style="left:938.80px;width:200px;text-align:right;top:830.54px;line-height:10.11px;">0.000</div><svg class="a" style="left:967.20px;top:830.10px" width="10" height="10" viewBox="0 0 10 10"><circle cx="5" cy="5" r="3.05" fill="#a1a1a1" stroke="#0c0c0c" stroke-width="1.1"/></svg><div class="fd" style="left:981.20px;top:845.80px;width:164.70px;height:14.00px;overflow:hidden"></div><div class="tx" style="left:992.40px;top:847.84px;line-height:10.11px;">W</div><div class="tx" style="left:934.80px;width:200px;text-align:right;top:847.84px;line-height:10.11px;">0.000</div><svg class="a" style="left:967.20px;top:847.40px" width="10" height="10" viewBox="0 0 10 10"><circle cx="5" cy="5" r="3.05" fill="#a1a1a1" stroke="#0c0c0c" stroke-width="1.1"/></svg><div class="fd" style="left:981.20px;top:862.40px;width:164.70px;height:14.00px;overflow:hidden"></div><div class="tx" style="left:992.40px;top:864.44px;line-height:10.11px;">Scale</div><div class="tx" style="left:934.80px;width:200px;text-align:right;top:864.44px;line-height:10.11px;">5.000</div><svg class="a" style="left:967.20px;top:864.00px" width="10" height="10" viewBox="0 0 10 10"><circle cx="5" cy="5" r="3.05" fill="#a1a1a1" stroke="#0c0c0c" stroke-width="1.1"/></svg><div class="fd" style="left:981.20px;top:879.00px;width:164.70px;height:14.00px;overflow:hidden"></div><div class="tx" style="left:992.40px;top:881.04px;line-height:10.11px;">Randomness</div><div class="tx" style="left:934.80px;width:200px;text-align:right;top:881.04px;line-height:10.11px;">1.000</div><svg class="a" style="left:967.20px;top:880.60px" width="10" height="10" viewBox="0 0 10 10"><circle cx="5" cy="5" r="3.05" fill="#a1a1a1" stroke="#0c0c0c" stroke-width="1.1"/></svg>
<div class="nd" style="left:1177.80px;top:550.20px;width:188.10px;height:348.00px"><div class="hd" style="height:17.20px"></div></div><svg class="a" style="left:1184.80px;top:555.80px" width="6" height="6" viewBox="0 0 6 6"><path d="M0.5 0.1 L5.5 0.1 L3 5.2 Z" fill="#cad6bd"/></svg><div class="ht" style="left:1196.30px;top:552.74px;line-height:10.11px;">Minkowski Scale Distortion</div><svg class="a" style="left:1345.90px;top:550.20px" width="16" height="16" viewBox="0 0 16 16"><rect x="4.6" y="1.9" width="6.45" height="5.1" rx="1.1" fill="#e6eedb"/><rect x="5.9" y="5.1" width="3.95" height="0.8" fill="#5e6a55"/><rect x="2.9" y="8.85" width="6.6" height="5.1" rx="1.1" fill="#e2ecd6"/><rect x="4.2" y="12.2" width="3.8" height="0.75" fill="#5e6a55"/><path d="M12.3 2.9 Q13.7 3.6 13.7 6 L13.7 10.2 Q13.7 11.3 12.6 11.3 L9.6 11.3" fill="none" stroke="#aebd9e" stroke-width="1.1"/><path d="M12.0 2.6 L13.0 3.2 L12.6 4.6 Z" fill="#d8e4cc"/><path d="M9.4 10.4 L11.2 11.3 L9.4 12.2 Z" fill="#c4d2b6"/></svg><div class="tx" style="left:1156.60px;width:200px;text-align:right;top:573.14px;line-height:10.11px;">Vector</div><svg class="a" style="left:1360.90px;top:572.90px" width="10" height="10" viewBox="0 0 10 10"><circle cx="5" cy="5" r="3.05" fill="#6363c7" stroke="#0c0c0c" stroke-width="1.1"/></svg><div class="tx" style="left:1156.60px;width:200px;text-align:right;top:590.04px;line-height:10.11px;">Distance</div><svg class="a" style="left:1360.90px;top:589.80px" width="10" height="10" viewBox="0 0 10 10"><circle cx="5" cy="5" r="3.05" fill="#a1a1a1" stroke="#0c0c0c" stroke-width="1.1"/></svg><div class="tx" style="left:1156.60px;width:200px;text-align:right;top:606.64px;line-height:10.11px;">Color</div><svg class="a" style="left:1360.90px;top:606.40px" width="10" height="10" viewBox="0 0 10 10"><circle cx="5" cy="5" r="3.05" fill="#c7c729" stroke="#0c0c0c" stroke-width="1.1"/></svg><div class="tx" style="left:1156.60px;width:200px;text-align:right;top:623.14px;line-height:10.11px;">Position</div><svg class="a" style="left:1360.90px;top:622.90px" width="10" height="10" viewBox="0 0 10 10"><circle cx="5" cy="5" r="3.05" fill="#6363c7" stroke="#0c0c0c" stroke-width="1.1"/></svg><div class="tx" style="left:1156.60px;width:200px;text-align:right;top:639.74px;line-height:10.11px;">W</div><svg class="a" style="left:1360.90px;top:639.50px" width="10" height="10" viewBox="0 0 10 10"><circle cx="5" cy="5" r="3.05" fill="#a1a1a1" stroke="#0c0c0c" stroke-width="1.1"/></svg><div class="a" style="left:1186.80px;top:661.90px;width:170.10px;height:14.00px;background:#2b2b2b;border-radius:2.5px;box-shadow:0 1px 0 #363636"></div><div class="a" style="left:1210.50px;top:661.90px;width:130.90px;height:14.00px;background:#1d1d1d"></div><svg class="a" style="left:1189.10px;top:662.90px" width="12" height="12" viewBox="0 0 12 12"><circle cx="6" cy="6" r="5" fill="#d8d8d8"/><path d="M6 1 A5 5 0 0 1 11 6 L6 6 Z" fill="#2a2a2a"/><path d="M6 6 L1 6 A5 5 0 0 0 6 11 Z" fill="#2a2a2a"/><circle cx="6" cy="6" r="4.9" fill="none" stroke="#d8d8d8" stroke-width="0.9"/></svg><svg class="a" style="left:1202.10px;top:667.50px" width="6" height="4" viewBox="0 0 6 4"><path d="M0.5 0.7 L3 3.3 L5.5 0.7" fill="none" stroke="#d8d8d8" stroke-width="1.1"/></svg><div class="tx" style="left:1216.50px;top:664.14px;line-height:10.11px;">Minkowski Scale Distortion</div><div class="a" style="left:1341.60px;top:661.90px;width:15.30px;height:14.00px;background:#4772b3;border-radius:0 2.5px 2.5px 0"></div><svg class="a" style="left:1343.25px;top:662.40px" width="12" height="13" viewBox="0 0 12 13"><path d="M6 0.7 L7.2 1.6 L11 2.4 L11 6 Q11 10.3 6 12.4 Q1 10.3 1 6 L1 2.4 L4.8 1.6 Z" fill="#f4f6fa"/><path d="M3.4 6.6 L5.2 8.4 L8.8 4.6" fill="none" stroke="#4a6796" stroke-width="1.4"/></svg><div class="tx" style="left:1186.80px;top:683.14px;line-height:10.11px;">Vector:</div><div class="fd" style="left:1186.80px;top:696.70px;width:170.10px;height:45.80px"></div><div class="a" style="left:1186.80px;top:711.00px;width:170.10px;height:1px;background:#3f3f3f"></div><div class="a" style="left:1186.80px;top:726.70px;width:170.10px;height:1px;background:#3f3f3f"></div><div class="tx" style="left:1185.20px;width:170.10px;text-align:center;top:698.74px;line-height:10.11px;">0.000</div><div class="tx" style="left:1185.20px;width:170.10px;text-align:center;top:713.99px;line-height:10.11px;">0.000</div><div class="tx" style="left:1185.20px;width:170.10px;text-align:center;top:729.49px;line-height:10.11px;">0.000</div><svg class="a" style="left:1172.80px;top:707.20px" width="10" height="10" viewBox="0 0 10 10"><circle cx="5" cy="5" r="3.05" fill="#6363c7" stroke="#0c0c0c" stroke-width="1.1"/></svg><div class="fd" style="left:1186.80px;top:745.90px;width:170.10px;height:14.00px;overflow:hidden"></div><div class="tx" style="left:1198.00px;top:747.94px;line-height:10.11px;">XYZ Strength</div><div class="tx" style="left:1145.80px;width:200px;text-align:right;top:747.94px;line-height:10.11px;">0.500</div><svg class="a" style="left:1172.80px;top:747.50px" width="10" height="10" viewBox="0 0 10 10"><circle cx="5" cy="5" r="3.05" fill="#a1a1a1" stroke="#0c0c0c" stroke-width="1.1"/></svg><div class="fd" style="left:1186.80px;top:762.10px;width:170.10px;height:14.00px;overflow:hidden"></div><div class="tx" style="left:1194.50px;top:764.14px;line-height:10.11px;">Individual Override</div><div class="tx" style="left:1149.80px;width:200px;text-align:right;top:764.14px;line-height:10.11px;">0.000</div><svg class="a" style="left:1172.80px;top:763.70px" width="10" height="10" viewBox="0 0 10 10"><circle cx="5" cy="5" r="3.05" fill="#a1a1a1" stroke="#0c0c0c" stroke-width="1.1"/></svg><div class="fd" style="left:1186.80px;top:778.80px;width:170.10px;height:14.00px;overflow:hidden"></div><div class="tx" style="left:1198.00px;top:780.84px;line-height:10.11px;">X Strength</div><div class="tx" style="left:1145.80px;width:200px;text-align:right;top:780.84px;line-height:10.11px;">0.000</div><svg class="a" style="left:1172.80px;top:780.40px" width="10" height="10" viewBox="0 0 10 10"><circle cx="5" cy="5" r="3.05" fill="#a1a1a1" stroke="#0c0c0c" stroke-width="1.1"/></svg><div class="fd" style="left:1186.80px;top:795.30px;width:170.10px;height:14.00px;overflow:hidden"></div><div class="tx" style="left:1198.00px;top:797.34px;line-height:10.11px;">Y Strength</div><div class="tx" style="left:1145.80px;width:200px;text-align:right;top:797.34px;line-height:10.11px;">0.000</div><svg class="a" style="left:1172.80px;top:796.90px" width="10" height="10" viewBox="0 0 10 10"><circle cx="5" cy="5" r="3.05" fill="#a1a1a1" stroke="#0c0c0c" stroke-width="1.1"/></svg><div class="fd" style="left:1186.80px;top:811.90px;width:170.10px;height:14.00px;overflow:hidden"></div><div class="tx" style="left:1198.00px;top:813.94px;line-height:10.11px;">Z Strength</div><div class="tx" style="left:1145.80px;width:200px;text-align:right;top:813.94px;line-height:10.11px;">0.000</div><svg class="a" style="left:1172.80px;top:813.50px" width="10" height="10" viewBox="0 0 10 10"><circle cx="5" cy="5" r="3.05" fill="#a1a1a1" stroke="#0c0c0c" stroke-width="1.1"/></svg><div class="fd" style="left:1186.80px;top:828.50px;width:170.10px;height:14.00px;overflow:hidden"></div><div class="tx" style="left:1194.50px;top:830.54px;line-height:10.11px;">Softness</div><div class="tx" style="left:1149.80px;width:200px;text-align:right;top:830.54px;line-height:10.11px;">0.000</div><svg class="a" style="left:1172.80px;top:830.10px" width="10" height="10" viewBox="0 0 10 10"><circle cx="5" cy="5" r="3.05" fill="#a1a1a1" stroke="#0c0c0c" stroke-width="1.1"/></svg><div class="fd" style="left:1186.80px;top:845.80px;width:170.10px;height:14.00px;overflow:hidden"></div><div class="tx" style="left:1198.00px;top:847.84px;line-height:10.11px;">W</div><div class="tx" style="left:1145.80px;width:200px;text-align:right;top:847.84px;line-height:10.11px;">0.000</div><svg class="a" style="left:1172.80px;top:847.40px" width="10" height="10" viewBox="0 0 10 10"><circle cx="5" cy="5" r="3.05" fill="#a1a1a1" stroke="#0c0c0c" stroke-width="1.1"/></svg><div class="fd" style="left:1186.80px;top:862.40px;width:170.10px;height:14.00px;overflow:hidden"></div><div class="tx" style="left:1198.00px;top:864.44px;line-height:10.11px;">Scale</div><div class="tx" style="left:1145.80px;width:200px;text-align:right;top:864.44px;line-height:10.11px;">5.000</div><svg class="a" style="left:1172.80px;top:864.00px" width="10" height="10" viewBox="0 0 10 10"><circle cx="5" cy="5" r="3.05" fill="#a1a1a1" stroke="#0c0c0c" stroke-width="1.1"/></svg><div class="fd" style="left:1186.80px;top:879.00px;width:170.10px;height:14.00px;overflow:hidden"></div><div class="tx" style="left:1198.00px;top:881.04px;line-height:10.11px;">Randomness</div><div class="tx" style="left:1145.80px;width:200px;text-align:right;top:881.04px;line-height:10.11px;">1.000</div><svg class="a" style="left:1172.80px;top:880.60px" width="10" height="10" viewBox="0 0 10 10"><circle cx="5" cy="5" r="3.05" fill="#a1a1a1" stroke="#0c0c0c" stroke-width="1.1"/></svg>
</body></html>
